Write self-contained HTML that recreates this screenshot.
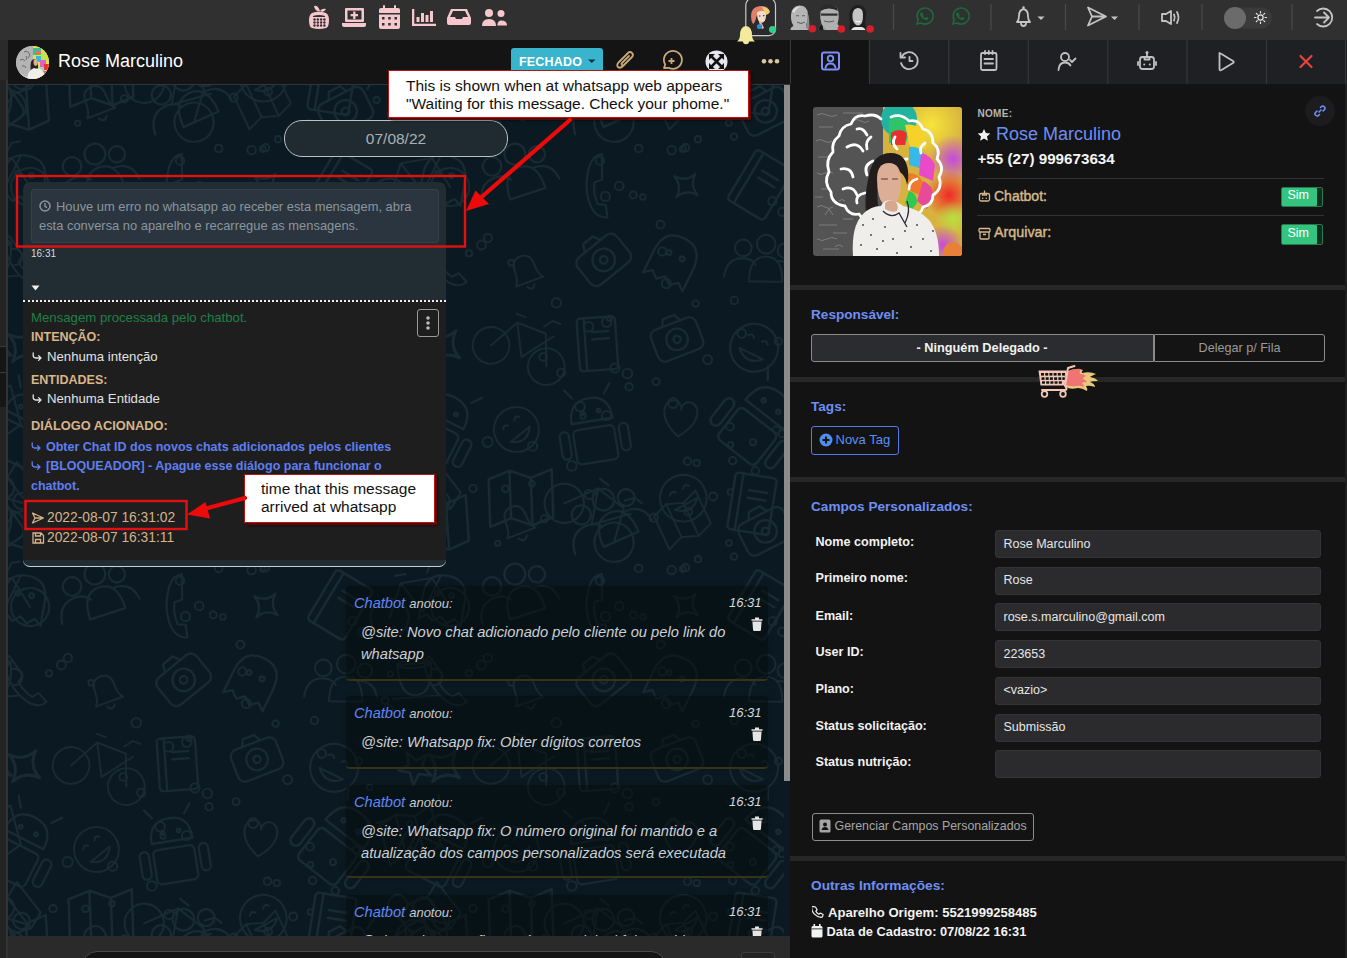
<!DOCTYPE html>
<html><head><meta charset="utf-8">
<style>
*{box-sizing:border-box;margin:0;padding:0}
html,body{width:1347px;height:958px;overflow:hidden;background:#303030;font-family:"Liberation Sans",sans-serif;position:relative}
.a{position:absolute}
#top{left:0;top:0;width:1347px;height:40px;background:#303030;z-index:20}
#lstrip{left:0;top:40px;width:8px;height:918px;background:#2b2b2b}
#chead{left:8px;top:40px;width:782px;height:45px;background:#141414;border-bottom:1px solid #30363b;z-index:5}
#cbody{left:8px;top:84px;width:776px;height:852px;background:#0b1a22;overflow:hidden}
#sbar{left:784px;top:84px;width:6px;height:697px;background:#8c8c8c}
#strack{left:784px;top:781px;width:6px;height:155px;background:#0b1a22}
#cfoot{left:8px;top:936px;width:782px;height:22px;background:#2a2a2a}
#rpanel{left:790px;top:40px;width:557px;height:918px;background:#131313}
</style></head><body>
<div id="top" class="a">
<svg class="a" style="left:0;top:0;overflow:visible" width="1347" height="48" viewBox="0 0 1347 48">
 <g fill="#f6c8cd">
  <!-- apple calendar -->
  <path d="M314 6 q4 -1 6 5 q-5 1 -6 -5z M320 11 q2 -3 6 -2 q-2 4 -6 2z"/>
  <path d="M312 13 q7 -3 14 0 q3 2 3 7 q0 7 -3 8 q-7 2 -14 0 q-3 -1 -3 -8 q0 -5 3 -7z"/>
  <!-- laptop medical -->
  <rect x="345" y="8" width="19" height="14" rx="1"/>
  <path d="M342 23 h24 v2 q0 2 -2 2 h-20 q-2 0 -2 -2z"/>
  <!-- calendar -->
  <rect x="379" y="8" width="21" height="21" rx="2"/>
  <rect x="383" y="5" width="2" height="5" rx="1"/><rect x="394" y="5" width="2" height="5" rx="1"/>
  <!-- chart -->
  <path d="M412 9 h2.3 v14.7 h21.7 v2.3 h-24z"/>
  <rect x="416.5" y="17" width="3" height="5"/><rect x="421" y="13" width="3" height="9"/><rect x="425.5" y="15" width="3" height="7"/><rect x="430" y="11" width="3" height="11"/>
  <!-- inbox -->
  <path d="M451 9 h16 l4 9 v5 q0 2 -2 2 h-20 q-2 0 -2 -2 v-5z"/>
  <!-- users -->
  <circle cx="489" cy="13" r="4"/><circle cx="501" cy="13.5" r="3.5"/>
  <path d="M482 26 q0 -7 7 -7 q7 0 7 7z"/><path d="M497 25.5 q1 -5 4 -5 q6 0 6 5z"/>
 </g>
 <g fill="#303030">
  <path d="M313 16 q6 -2 12 0 v1 h-12z"/>
  <g><circle cx="314.5" cy="19.5" r="1.2"/><circle cx="317.8" cy="19.5" r="1.2"/><circle cx="321.1" cy="19.5" r="1.2"/><circle cx="324.4" cy="19.5" r="1.2"/>
  <circle cx="314.5" cy="22.5" r="1.2"/><circle cx="317.8" cy="22.5" r="1.2"/><circle cx="321.1" cy="22.5" r="1.2"/><circle cx="324.4" cy="22.5" r="1.2"/>
  <circle cx="314.5" cy="25.5" r="1.2"/><circle cx="317.8" cy="25.5" r="1.2"/><circle cx="321.1" cy="25.5" r="1.2"/><circle cx="324.4" cy="25.5" r="1.2"/></g>
  <rect x="347.5" y="10.5" width="14" height="9"/>
  <rect x="379" y="13" width="21" height="1.5"/>
  <rect x="382" y="17" width="2.5" height="2.5"/><rect x="388.2" y="17" width="2.5" height="2.5"/><rect x="394.5" y="17" width="2.5" height="2.5"/>
  <rect x="382" y="23" width="2.5" height="2.5"/><rect x="388.2" y="23" width="2.5" height="2.5"/><rect x="394.5" y="23" width="2.5" height="2.5"/>
  <path d="M453 11 h12 l3 6 h-5 l-1 2 h-6 l-1 -2 h-5z"/>
  <rect x="496" y="19" width="1.2" height="8"/>
 </g>
 <path d="M350.6 15.2 h7.4 M354.3 11.5 v7.4" stroke="#f6c8cd" stroke-width="2.3"/>
 <!-- avatar box -->
 <rect x="745.8" y="-1.6" width="29.7" height="37.2" rx="6.5" fill="#2a2a2c" stroke="#c8c8c8" stroke-width="1.2"/>
 <g>
  <path d="M751 16 q0 -9 9 -10 q8 -1 10 6 q-3 -2 -8 -1 q-5 2 -6 7 q-1 5 -3 6 q-2 -3 -2 -8z" fill="#e0806a"/>
  <path d="M762 7 q6 0 8 5 q-2 3 -4 3z" fill="#ecd070"/>
  <path d="M757 12.5 q4 -3 8 -1 q2 4 0 9 q-2 3 -5 2 q-3 -2 -3 -10z" fill="#f3dcc8"/>
  <path d="M759 16 h1.4 M763 15.6 h1.4" stroke="#3a2a2a" stroke-width="1.1"/>
  <path d="M760 21 q2 2 4 7 l-2 1 q-2 -3 -3 -7z" fill="#eab8a0"/>
  <circle cx="759.5" cy="26.5" r="2.6" fill="#2a8fd0"/>
  <circle cx="772.6" cy="29.5" r="3.6" fill="#2fd08a"/>
 </g>
 <path d="M737 41.5 q2.5 -1.5 3 -6 q0 -9 6 -9.5 q6 0.5 6 9.5 q0.5 4.5 3 6z M743 41.5 h6 q0 2.8 -3 2.8 q-3 0 -3 -2.8z" fill="#f3ea9c"/>
 <!-- grayscale avatars -->
 <g>
  <path d="M790.5 30 q0 -3 3 -4 q-3 -5 -2.5 -11 q0.5 -9 8.5 -9.5 q8 0 8.5 9 q0.3 6 -2 11 q3 1 3 4.5z" fill="#b6b6b6"/>
  <path d="M792 12 q3 -6 9 -5.5 q-5 2 -6.5 6z" fill="#dedede"/>
  <path d="M796 16 q2 -1 3 0 M802 16 q2 -1 3 0 M797 22 q4 3 8 0" stroke="#5a5a5a" stroke-width="1" fill="none"/>
  <path d="M805 9 q3 4 2.5 10 q-0.5 5 -2 8 l3 3 h1 q0 -10 -1 -15z" fill="#8a8a8a"/>
  <path d="M818.5 30 q0 -4 3 -6 q-2 -6 -1 -12 q1 -7 9 -7 q8 0 9 7 q1 6 -1 12 q2.5 2 2.5 6z" fill="#b0b0b0"/>
  <path d="M820.5 11 q0 -6 8.5 -6.5 q8 0 9 6.5 q-4 -2.5 -9 -2.5 q-5 0 -8.5 2.5z" fill="#2a2a2a"/>
  <path d="M821 13.5 h16.5 v2.2 h-16.5z" fill="#303030"/>
  <path d="M824 21 q5 2 10 0" stroke="#5a5a5a" stroke-width="1" fill="none"/>
  <path d="M818.5 30 q0 -4 3 -6 l4 6z" fill="#1a1a1a"/><path d="M822.5 25 l2.5 5 h-1.2z" fill="#e0e0e0"/>
  <path d="M849 30 q0 -4 1 -8 q-2 -9 1 -13 q3 -4 7 -4 q5 0 7 4 q2 5 0 13 q1 4 1 8z" fill="#1e1e1e"/>
  <path d="M852.5 14 q1 -6 5.5 -6 q5 0 5 7 q0 7 -2 9 q-3 3 -6 0 q-3 -3 -2.5 -10z" fill="#c4c4c4"/>
  <path d="M855.5 21 q2.5 1.5 5 0" stroke="#f5f5f5" stroke-width="1.2" fill="none"/>
  <path d="M851 30 q2 -3 4 -3 h6 q3 0 4.5 3z" fill="#e6e6e6"/>
  <circle cx="812.4" cy="28.8" r="3.8" fill="#d61f2b"/>
  <circle cx="841.4" cy="29" r="3.8" fill="#d61f2b"/>
  <circle cx="870.2" cy="29" r="3.8" fill="#d61f2b"/>
 </g>
 <g stroke="#4a4a4a" stroke-width="1.2">
  <path d="M893.5 4 v26 M991 4 v26 M1065.5 4 v26 M1139 4 v26 M1202 4 v26 M1292 4 v26"/>
 </g>
 <!-- whatsapp -->
 <g fill="none" stroke="#1b6a3b" stroke-width="1.6">
  <path d="M917 24 l1.2 -4 a8 8 0 1 1 3 3 z"/>
  <path d="M953 24 l1.2 -4 a8 8 0 1 1 3 3 z"/>
 </g>
 <g fill="#1b6a3b">
  <path d="M920.5 13 q1 -1 2 0 l1 2 q-1 1 0 2 q1 1 2 1 l1 -1 l2 1 q0 2 -1.5 2 q-4 0 -6.5 -4 q-1 -2 0 -3z"/>
  <path d="M956.5 13 q1 -1 2 0 l1 2 q-1 1 0 2 q1 1 2 1 l1 -1 l2 1 q0 2 -1.5 2 q-4 0 -6.5 -4 q-1 -2 0 -3z"/>
 </g>
 <!-- bell -->
 <g fill="none" stroke="#c4c4c4" stroke-width="1.8" stroke-linejoin="round">
  <path d="M1017 22 q2 -2 2 -6 q0 -6 4.5 -7 q4.5 1 4.5 7 q0 4 2 6z"/>
  <path d="M1021 23 q0 3 2.5 3 q2.5 0 2.5 -3"/>
 </g>
 <circle cx="1023.5" cy="7.5" r="1.2" fill="#c4c4c4"/>
 <path d="M1037.5 16.5 h7 l-3.5 3.5z" fill="#c4c4c4"/>
 <!-- send -->
 <path d="M1088 7.5 l18 9 l-18 9 l4 -9z M1092 16.5 h13" fill="none" stroke="#c4c4c4" stroke-width="1.8" stroke-linejoin="round"/>
 <path d="M1111 16.5 h7 l-3.5 3.5z" fill="#c4c4c4"/>
 <!-- speaker -->
 <path d="M1162 14 h4 l5 -3 v13 l-5 -3 h-4z" fill="none" stroke="#c4c4c4" stroke-width="1.8" stroke-linejoin="round"/>
 <path d="M1174 14.5 q1.5 3 0 6 M1177 12 q3 5.5 0 11" fill="none" stroke="#c4c4c4" stroke-width="1.8" stroke-linecap="round"/>
 <!-- toggle -->
 <rect x="1224" y="7.5" width="48" height="21" rx="10.5" fill="#3a3a3a"/>
 <circle cx="1235" cy="18" r="11" fill="#6b6b6b"/>
 <g stroke="#e8e8e8" stroke-width="1.2" stroke-linecap="round"><circle cx="1260.5" cy="17.5" r="2.6" fill="none"/>
 <path d="M1260.5 11.5 v1.5 M1260.5 22 v1.5 M1254.5 17.5 h1.5 M1265 17.5 h1.5 M1256.3 13.3 l1 1 M1263.7 20.7 l1 1 M1256.3 21.7 l1 -1 M1263.7 14.3 l1 -1"/></g>
 <!-- logout -->
 <path d="M1317 11 a9 9 0 1 1 0 13" fill="none" stroke="#c4c4c4" stroke-width="1.8" stroke-linecap="round"/>
 <path d="M1315 17.5 h14 M1324 12.5 l5 5 l-5 5" fill="none" stroke="#c4c4c4" stroke-width="1.8" stroke-linecap="round" stroke-linejoin="round"/>
</svg>
</div>
<div id="lstrip" class="a">
 <div class="a" style="left:0;top:40px;width:6px;height:878px;background:#242424"></div>
 <div class="a" style="left:6px;top:40px;width:2px;height:878px;background:#333"></div>
 <div class="a" style="left:0;top:306px;width:6px;height:61px;background:#161616;border-top:1px solid #3a3a3a"></div>
 <div class="a" style="left:0;top:332px;width:6px;height:1px;background:#3a3a3a"></div>
</div>
<div id="chead" class="a">
 <div class="a" style="left:8px;top:6px;width:33px;height:33px;border-radius:50%;overflow:hidden;background:#aaa">
  <svg width="33" height="33" viewBox="0 0 33 33">
   <rect width="33" height="33" fill="#b4b4b4"/>
   <g fill="none" stroke="#6a6a6a" stroke-width="1"><path d="M8 6 q3 -2 5 1 q2 3 -1 5 M4 14 q3 -2 5 1 M6 20 q3 -1 4 2 M10 10 q2 2 0 4"/></g>
   <path d="M3 26 q4 4 12 6 h-15z" fill="#cfcfcf"/>
   <rect x="17" y="0" width="16" height="33" fill="#e6e23a"/>
   <path d="M17 2 h8 v7 h-8z" fill="#3ac08a"/><path d="M19 5 h6 v3 h-6z" fill="#f06a6a"/>
   <path d="M20 10 h5 v6 h-5z" fill="#38b8d8"/><path d="M25 6 h8 v8 h-8z" fill="#c9e04a"/>
   <path d="M24 14 h6 v7 h-6z" fill="#e060c8"/><path d="M28 18 h5 v6 h-5z" fill="#e83434"/>
   <path d="M22 21 h6 v8 h-6z" fill="#9ad8a8"/><path d="M27 25 h6 v6 h-6z" fill="#d050d0"/>
   <path d="M15 28 q-1 -8 0 -12 q1 -3 4 -3 q3 0 3 4 v6z" fill="#2a2220"/>
   <path d="M17.5 16 q0 -3 2.2 -3 q2.3 0 2.3 3.5 q0 3 -2.3 3.5 q-2.2 -.5 -2.2 -4z" fill="#d9b199"/>
   <path d="M11 33 q1 -9 7 -11 q3 1 5 0 q6 3 7 11z" fill="#eeeeea"/>
  </svg>
 </div>
 <div class="a" style="left:50px;top:10px;font-size:18px;color:#fff;white-space:nowrap;line-height:22px">Rose Marculino</div>
 <div class="a" style="left:503px;top:7.5px;width:92px;height:30px;background:#38b4cc;border-radius:3px"></div>
 <div class="a" style="left:511px;top:15px;font-size:12.5px;font-weight:bold;color:#fff;line-height:15px;letter-spacing:0.2px">FECHADO</div>
 <svg class="a" style="left:0;top:0" width="782" height="44" viewBox="8 40 782 44">
  <path d="M588 59.5 h7.5 l-3.75 3.5z" fill="#15303c"/>
  <!-- paperclip -->
  <path d="M632 55 l-9 9 q-3 3 -5 1 q-2 -2 1 -5 l9 -9 q2 -2 4 0 q2 2 0 4 l-8 8 q-1 1 -2 0 q-1 -1 0 -2 l7 -7" fill="none" stroke="#c9a877" stroke-width="1.8" stroke-linecap="round" transform="translate(0,2)"/>
  <!-- comment plus -->
  <path d="M664 68 l1.2 -3.5 a9 9 0 1 1 3.5 3.3 z" fill="none" stroke="#c9a877" stroke-width="1.8" stroke-linejoin="round"/>
  <path d="M671.5 58 v6 M668.5 61 h6" stroke="#c9a877" stroke-width="1.8"/>
  <!-- expand -->
  <circle cx="716.5" cy="61.5" r="11" fill="#e6e6ee"/>
  <g stroke="#111" stroke-width="2.6" stroke-linecap="square"><path d="M711 56 l11 11 M722 56 l-11 11"/></g>
  <g fill="#111"><path d="M709 54 h6 l-6 6z M724 54 h-6 l6 6z M709 69 h6 l-6 -6z M724 69 h-6 l6 -6z"/></g>
  <g fill="#d9c9a2"><circle cx="764" cy="61.3" r="2.3"/><circle cx="770.5" cy="61.3" r="2.3"/><circle cx="777" cy="61.3" r="2.3"/></g>
 </svg>
</div>
<div id="cbody" class="a">
 <div id="doodle" class="a" style="left:0;top:0;width:776px;height:852px"><svg class="a" style="left:0;top:0" width="776" height="852"><defs><pattern id="dd" x="-30" y="-20" width="420" height="420" patternUnits="userSpaceOnUse"><g fill="none" stroke="#1a2a32" stroke-width="1.8" stroke-linecap="round" stroke-linejoin="round"><g transform="translate(-420,-420)"><g transform="translate(39.2,41.0) rotate(-4) scale(1.27)"><path d="M-24 -16 l16 -6 l16 6 l16 -6 v36 l-16 6 l-16 -6 l-16 6z M-8 -22 v36 M8 -16 v36"/></g><g transform="translate(45.7,115.0) rotate(10) scale(1.18)"><path d="M-18 20 v-20 q0 -20 18 -20 q18 0 18 20 v20 l-6 -5 l-6 5 l-6 -5 l-6 5 l-6 -5z"/><circle cx="-6" cy="-4" r="2"/><circle cx="6" cy="-4" r="2"/></g><g transform="translate(44.7,193.5) rotate(3) scale(1.05)"><path d="M-14 -20 q-6 6 -2 16 q8 20 24 28 q10 4 16 -2 l-8 -8 l-6 4 q-10 -6 -14 -14 l4 -6z"/></g><g transform="translate(46.2,282.2) rotate(37) scale(1.61)"><path d="M0 -12 q2 10 12 12 q-10 2 -12 12 q-2 -10 -12 -12 q10 -2 12 -12z"/></g><g transform="translate(42.5,361.8) rotate(27) scale(1.22)"><path d="M-18 -6 q0 -20 18 -20 q18 0 18 20z M-14 -28 l-6 -8 M14 -28 l6 -8"/><rect x="-18" y="0" width="36" height="30" rx="4"/><rect x="-30" y="0" width="8" height="24" rx="4"/><rect x="22" y="0" width="8" height="24" rx="4"/><circle cx="-7" cy="-14" r="1.5"/><circle cx="7" cy="-14" r="1.5"/></g><g transform="translate(33.0,432.6) rotate(-38) scale(1.08)"><path d="M-24 -16 l16 -6 l16 6 l16 -6 v36 l-16 6 l-16 -6 l-16 6z M-8 -22 v36 M8 -16 v36"/></g><g transform="translate(119.4,39.0) rotate(-21) scale(1.07)"><path d="M-14 10 q4 -4 4 -14 q0 -12 10 -12 q10 0 10 12 q0 10 4 14z M-4 14 q4 6 8 0"/></g><g transform="translate(116.7,112.1) rotate(-18) scale(1.16)"><circle cx="-16" cy="-14" r="8"/><circle cx="6" cy="-18" r="9"/><circle cx="24" cy="-12" r="7"/><path d="M-34 14 q2 -18 18 -18 q8 0 12 6 M-10 18 q0 -24 16 -24 q16 0 16 24z M18 -2 q16 0 18 16"/></g><g transform="translate(128.0,207.9) rotate(-20) scale(1.03)"><path d="M-14 10 q4 -4 4 -14 q0 -12 10 -12 q10 0 10 12 q0 10 4 14z M-4 14 q4 6 8 0"/></g><g transform="translate(124.1,280.2) rotate(21) scale(1.02)"><circle cx="-28" cy="12" r="18"/><circle cx="30" cy="12" r="18"/><path d="M-28 12 l16 -30 h30 l12 30 M-12 -18 l16 30 l22 -30 M-16 -26 h10 M14 -24 l6 -8 h8"/></g><g transform="translate(118.4,365.5) rotate(-39) scale(1.02)"><circle cx="0" cy="0" r="22"/><path d="M-10 -8 q3 -4 6 0 M4 -8 q3 -4 6 0 M-12 6 q12 12 24 0z"/></g><g transform="translate(123.0,435.4) rotate(-2) scale(1.32)"><path d="M-24 -16 l16 -6 l16 6 l16 -6 v36 l-16 6 l-16 -6 l-16 6z M-8 -22 v36 M8 -16 v36"/></g><g transform="translate(207.7,38.4) rotate(-24) scale(1.20)"><circle cx="-16" cy="-14" r="8"/><circle cx="6" cy="-18" r="9"/><circle cx="24" cy="-12" r="7"/><path d="M-34 14 q2 -18 18 -18 q8 0 12 6 M-10 18 q0 -24 16 -24 q16 0 16 24z M18 -2 q16 0 18 16"/></g><g transform="translate(202.8,117.4) rotate(37) scale(1.12)"><path d="M-14 -20 q-6 6 -2 16 q8 20 24 28 q10 4 16 -2 l-8 -8 l-6 4 q-10 -6 -14 -14 l4 -6z"/></g><g transform="translate(204.1,193.9) rotate(-39) scale(1.25)"><rect x="-20" y="-12" width="40" height="28" rx="6"/><circle cx="0" cy="2" r="9"/><circle cx="0" cy="2" r="3"/><path d="M-8 -12 l3 -6 h10 l3 6"/></g><g transform="translate(199.4,279.8) rotate(-4) scale(1.20)"><rect x="-16" y="-22" width="32" height="44" rx="3"/><path d="M-10 -22 v44 M-4 -10 h14 M-4 -4 h14"/></g><g transform="translate(195.1,363.7) rotate(-9) scale(1.15)"><path d="M-18 -6 q0 -20 18 -20 q18 0 18 20z M-14 -28 l-6 -8 M14 -28 l6 -8"/><rect x="-18" y="0" width="36" height="30" rx="4"/><rect x="-30" y="0" width="8" height="24" rx="4"/><rect x="22" y="0" width="8" height="24" rx="4"/><circle cx="-7" cy="-14" r="1.5"/><circle cx="7" cy="-14" r="1.5"/></g><g transform="translate(198.3,447.8) rotate(38) scale(1.09)"><circle cx="-28" cy="12" r="18"/><circle cx="30" cy="12" r="18"/><path d="M-28 12 l16 -30 h30 l12 30 M-12 -18 l16 30 l22 -30 M-16 -26 h10 M14 -24 l6 -8 h8"/></g><g transform="translate(284.9,36.9) rotate(-25) scale(1.01)"><path d="M-24 -16 l16 -6 l16 6 l16 -6 v36 l-16 6 l-16 -6 l-16 6z M-8 -22 v36 M8 -16 v36"/></g><g transform="translate(287.9,121.6) rotate(39) scale(1.24)"><path d="M0 -12 q2 10 12 12 q-10 2 -12 12 q-2 -10 -12 -12 q10 -2 12 -12z"/></g><g transform="translate(275.4,196.1) rotate(26) scale(1.21)"><path d="M-18 20 v-20 q0 -20 18 -20 q18 0 18 20 v20 l-6 -5 l-6 5 l-6 -5 l-6 5 l-6 -5z"/><circle cx="-6" cy="-4" r="2"/><circle cx="6" cy="-4" r="2"/></g><g transform="translate(278.2,273.2) rotate(-21) scale(1.20)"><rect x="-20" y="-12" width="40" height="28" rx="6"/><circle cx="0" cy="2" r="9"/><circle cx="0" cy="2" r="3"/><path d="M-8 -12 l3 -6 h10 l3 6"/></g><g transform="translate(281.6,357.9) rotate(7) scale(1.04)"><path d="M0 14 C-22 -2 -18 -20 -7 -20 C-3 -20 0 -16 0 -12 C0 -16 3 -20 7 -20 C18 -20 22 -2 0 14z"/></g><g transform="translate(285.3,434.2) rotate(-28) scale(1.06)"><circle cx="0" cy="0" r="22"/><path d="M-10 -8 q3 -4 6 0 M4 -8 q3 -4 6 0 M-12 6 q12 12 24 0z"/></g><g transform="translate(366.5,45.1) rotate(-27) scale(1.25)"><rect x="-20" y="-12" width="40" height="28" rx="6"/><circle cx="0" cy="2" r="9"/><circle cx="0" cy="2" r="3"/><path d="M-8 -12 l3 -6 h10 l3 6"/></g><g transform="translate(362.1,120.9) rotate(31) scale(1.33)"><rect x="-16" y="-22" width="32" height="44" rx="3"/><path d="M-10 -22 v44 M-4 -10 h14 M-4 -4 h14"/></g><g transform="translate(361.7,198.7) rotate(1) scale(1.04)"><circle cx="-16" cy="-14" r="8"/><circle cx="6" cy="-18" r="9"/><circle cx="24" cy="-12" r="7"/><path d="M-34 14 q2 -18 18 -18 q8 0 12 6 M-10 18 q0 -24 16 -24 q16 0 16 24z M18 -2 q16 0 18 16"/></g><g transform="translate(356.1,283.8) rotate(26) scale(1.09)"><circle cx="0" cy="0" r="22"/><path d="M-10 -8 q3 -4 6 0 M4 -8 q3 -4 6 0 M-12 6 q12 12 24 0z"/></g><g transform="translate(361.5,356.7) rotate(38) scale(1.33)"><path d="M-18 -6 q0 -20 18 -20 q18 0 18 20z M-14 -28 l-6 -8 M14 -28 l6 -8"/><rect x="-18" y="0" width="36" height="30" rx="4"/><rect x="-30" y="0" width="8" height="24" rx="4"/><rect x="22" y="0" width="8" height="24" rx="4"/><circle cx="-7" cy="-14" r="1.5"/><circle cx="7" cy="-14" r="1.5"/></g><g transform="translate(354.0,439.7) rotate(9) scale(1.30)"><rect x="-16" y="-22" width="32" height="44" rx="3"/><path d="M-10 -22 v44 M-4 -10 h14 M-4 -4 h14"/></g><g transform="translate(436.5,46.7) rotate(-34) scale(1.26)"><rect x="-20" y="-12" width="40" height="28" rx="6"/><circle cx="0" cy="2" r="9"/><circle cx="0" cy="2" r="3"/><path d="M-8 -12 l3 -6 h10 l3 6"/></g><g transform="translate(438.6,116.0) rotate(-10) scale(1.06)"><circle cx="-28" cy="12" r="18"/><circle cx="30" cy="12" r="18"/><path d="M-28 12 l16 -30 h30 l12 30 M-12 -18 l16 30 l22 -30 M-16 -26 h10 M14 -24 l6 -8 h8"/></g><g transform="translate(441.2,194.1) rotate(-4) scale(1.05)"><path d="M-20 -14 h32 q0 30 -16 30 q-16 0 -16 -30z M12 -8 q10 0 10 8 q0 8 -10 8 M-26 18 h44"/><ellipse cx="-4" cy="-14" rx="16" ry="4"/></g><g transform="translate(437.3,283.7) rotate(-29) scale(1.45)"><path d="M0 -12 l3 8 h8 l-6 5 l2 9 l-7 -5 l-7 5 l2 -9 l-6 -5 h8z"/></g><g transform="translate(432.6,352.3) rotate(-15) scale(1.13)"><path d="M-24 -16 l16 -6 l16 6 l16 -6 v36 l-16 6 l-16 -6 l-16 6z M-8 -22 v36 M8 -16 v36"/></g><g transform="translate(432.5,441.6) rotate(18) scale(1.17)"><circle cx="-16" cy="-14" r="8"/><circle cx="6" cy="-18" r="9"/><circle cx="24" cy="-12" r="7"/><path d="M-34 14 q2 -18 18 -18 q8 0 12 6 M-10 18 q0 -24 16 -24 q16 0 16 24z M18 -2 q16 0 18 16"/></g><circle cx="133.9" cy="419.7" r="2.7"/><circle cx="229.4" cy="309.5" r="4.8"/><circle cx="309.6" cy="295.6" r="4.5"/><circle cx="384.3" cy="147.8" r="4.2"/><circle cx="378.4" cy="365.9" r="3.5"/><circle cx="332.0" cy="362.7" r="3.9"/><circle cx="262.5" cy="160.6" r="4.0"/><circle cx="255.7" cy="33.7" r="4.1"/><circle cx="417.2" cy="369.5" r="4.3"/><circle cx="163.1" cy="308.7" r="4.0"/><circle cx="185.0" cy="352.1" r="2.7"/><circle cx="315.1" cy="12.5" r="4.0"/><circle cx="202.0" cy="96.7" r="4.2"/><circle cx="208.8" cy="258.1" r="4.8"/><circle cx="107.4" cy="4.7" r="3.3"/><circle cx="284.8" cy="85.1" r="2.9"/><circle cx="380.4" cy="277.2" r="3.6"/><circle cx="374.5" cy="137.3" r="4.2"/><circle cx="83.4" cy="181.0" r="4.5"/><circle cx="384.0" cy="369.7" r="3.5"/><circle cx="244.9" cy="132.9" r="2.8"/><circle cx="208.5" cy="351.6" r="4.6"/><circle cx="298.7" cy="399.0" r="3.2"/><circle cx="71.0" cy="189.3" r="3.2"/><circle cx="89.9" cy="173.9" r="4.1"/><circle cx="207.4" cy="132.5" r="4.6"/><circle cx="412.5" cy="190.0" r="2.7"/><circle cx="13.2" cy="366.6" r="2.6"/><circle cx="297.6" cy="239.6" r="3.3"/><circle cx="332.4" cy="8.0" r="2.8"/><circle cx="191.0" cy="10.4" r="4.6"/><circle cx="99.7" cy="59.2" r="2.6"/><circle cx="264.3" cy="187.5" r="4.1"/><circle cx="275.1" cy="339.1" r="4.9"/><circle cx="287.5" cy="83.7" r="3.7"/><circle cx="75.0" cy="4.5" r="3.7"/><circle cx="300.0" cy="75.2" r="3.2"/><circle cx="145.2" cy="292.9" r="3.8"/><circle cx="258.1" cy="317.6" r="3.5"/><circle cx="332.6" cy="380.6" r="2.7"/><circle cx="391.7" cy="303.4" r="2.8"/><circle cx="190.5" cy="262.7" r="4.8"/><circle cx="158.3" cy="238.9" r="4.7"/><circle cx="334.6" cy="396.6" r="3.7"/><circle cx="273.6" cy="86.1" r="4.3"/><circle cx="343.7" cy="269.5" r="4.3"/><circle cx="89.6" cy="378.0" r="5.0"/><circle cx="410.5" cy="225.5" r="4.5"/><circle cx="134.6" cy="382.2" r="4.6"/><circle cx="146.4" cy="34.8" r="3.6"/><circle cx="231.1" cy="322.7" r="3.7"/><circle cx="11.9" cy="339.8" r="2.7"/><circle cx="335.9" cy="72.6" r="3.3"/><circle cx="330.9" cy="59.0" r="2.9"/><circle cx="216.9" cy="303.9" r="4.6"/><circle cx="289.5" cy="397.2" r="3.7"/><circle cx="398.6" cy="36.1" r="3.1"/><circle cx="221.2" cy="121.9" r="4.3"/><circle cx="268.3" cy="219.6" r="4.6"/><circle cx="235.2" cy="130.9" r="3.5"/><circle cx="355.0" cy="378.2" r="3.0"/><circle cx="357.3" cy="406.7" r="3.8"/><circle cx="240.7" cy="84.4" r="3.8"/><circle cx="211.3" cy="254.2" r="2.6"/><circle cx="407.2" cy="216.7" r="3.5"/><circle cx="336.4" cy="236.4" r="3.7"/><circle cx="290.2" cy="27.7" r="3.8"/><circle cx="173.8" cy="401.9" r="4.8"/><circle cx="113.1" cy="198.7" r="2.8"/><circle cx="182.1" cy="342.6" r="4.8"/></g><g transform="translate(-420,0)"><g transform="translate(39.2,41.0) rotate(-4) scale(1.27)"><path d="M-24 -16 l16 -6 l16 6 l16 -6 v36 l-16 6 l-16 -6 l-16 6z M-8 -22 v36 M8 -16 v36"/></g><g transform="translate(45.7,115.0) rotate(10) scale(1.18)"><path d="M-18 20 v-20 q0 -20 18 -20 q18 0 18 20 v20 l-6 -5 l-6 5 l-6 -5 l-6 5 l-6 -5z"/><circle cx="-6" cy="-4" r="2"/><circle cx="6" cy="-4" r="2"/></g><g transform="translate(44.7,193.5) rotate(3) scale(1.05)"><path d="M-14 -20 q-6 6 -2 16 q8 20 24 28 q10 4 16 -2 l-8 -8 l-6 4 q-10 -6 -14 -14 l4 -6z"/></g><g transform="translate(46.2,282.2) rotate(37) scale(1.61)"><path d="M0 -12 q2 10 12 12 q-10 2 -12 12 q-2 -10 -12 -12 q10 -2 12 -12z"/></g><g transform="translate(42.5,361.8) rotate(27) scale(1.22)"><path d="M-18 -6 q0 -20 18 -20 q18 0 18 20z M-14 -28 l-6 -8 M14 -28 l6 -8"/><rect x="-18" y="0" width="36" height="30" rx="4"/><rect x="-30" y="0" width="8" height="24" rx="4"/><rect x="22" y="0" width="8" height="24" rx="4"/><circle cx="-7" cy="-14" r="1.5"/><circle cx="7" cy="-14" r="1.5"/></g><g transform="translate(33.0,432.6) rotate(-38) scale(1.08)"><path d="M-24 -16 l16 -6 l16 6 l16 -6 v36 l-16 6 l-16 -6 l-16 6z M-8 -22 v36 M8 -16 v36"/></g><g transform="translate(119.4,39.0) rotate(-21) scale(1.07)"><path d="M-14 10 q4 -4 4 -14 q0 -12 10 -12 q10 0 10 12 q0 10 4 14z M-4 14 q4 6 8 0"/></g><g transform="translate(116.7,112.1) rotate(-18) scale(1.16)"><circle cx="-16" cy="-14" r="8"/><circle cx="6" cy="-18" r="9"/><circle cx="24" cy="-12" r="7"/><path d="M-34 14 q2 -18 18 -18 q8 0 12 6 M-10 18 q0 -24 16 -24 q16 0 16 24z M18 -2 q16 0 18 16"/></g><g transform="translate(128.0,207.9) rotate(-20) scale(1.03)"><path d="M-14 10 q4 -4 4 -14 q0 -12 10 -12 q10 0 10 12 q0 10 4 14z M-4 14 q4 6 8 0"/></g><g transform="translate(124.1,280.2) rotate(21) scale(1.02)"><circle cx="-28" cy="12" r="18"/><circle cx="30" cy="12" r="18"/><path d="M-28 12 l16 -30 h30 l12 30 M-12 -18 l16 30 l22 -30 M-16 -26 h10 M14 -24 l6 -8 h8"/></g><g transform="translate(118.4,365.5) rotate(-39) scale(1.02)"><circle cx="0" cy="0" r="22"/><path d="M-10 -8 q3 -4 6 0 M4 -8 q3 -4 6 0 M-12 6 q12 12 24 0z"/></g><g transform="translate(123.0,435.4) rotate(-2) scale(1.32)"><path d="M-24 -16 l16 -6 l16 6 l16 -6 v36 l-16 6 l-16 -6 l-16 6z M-8 -22 v36 M8 -16 v36"/></g><g transform="translate(207.7,38.4) rotate(-24) scale(1.20)"><circle cx="-16" cy="-14" r="8"/><circle cx="6" cy="-18" r="9"/><circle cx="24" cy="-12" r="7"/><path d="M-34 14 q2 -18 18 -18 q8 0 12 6 M-10 18 q0 -24 16 -24 q16 0 16 24z M18 -2 q16 0 18 16"/></g><g transform="translate(202.8,117.4) rotate(37) scale(1.12)"><path d="M-14 -20 q-6 6 -2 16 q8 20 24 28 q10 4 16 -2 l-8 -8 l-6 4 q-10 -6 -14 -14 l4 -6z"/></g><g transform="translate(204.1,193.9) rotate(-39) scale(1.25)"><rect x="-20" y="-12" width="40" height="28" rx="6"/><circle cx="0" cy="2" r="9"/><circle cx="0" cy="2" r="3"/><path d="M-8 -12 l3 -6 h10 l3 6"/></g><g transform="translate(199.4,279.8) rotate(-4) scale(1.20)"><rect x="-16" y="-22" width="32" height="44" rx="3"/><path d="M-10 -22 v44 M-4 -10 h14 M-4 -4 h14"/></g><g transform="translate(195.1,363.7) rotate(-9) scale(1.15)"><path d="M-18 -6 q0 -20 18 -20 q18 0 18 20z M-14 -28 l-6 -8 M14 -28 l6 -8"/><rect x="-18" y="0" width="36" height="30" rx="4"/><rect x="-30" y="0" width="8" height="24" rx="4"/><rect x="22" y="0" width="8" height="24" rx="4"/><circle cx="-7" cy="-14" r="1.5"/><circle cx="7" cy="-14" r="1.5"/></g><g transform="translate(198.3,447.8) rotate(38) scale(1.09)"><circle cx="-28" cy="12" r="18"/><circle cx="30" cy="12" r="18"/><path d="M-28 12 l16 -30 h30 l12 30 M-12 -18 l16 30 l22 -30 M-16 -26 h10 M14 -24 l6 -8 h8"/></g><g transform="translate(284.9,36.9) rotate(-25) scale(1.01)"><path d="M-24 -16 l16 -6 l16 6 l16 -6 v36 l-16 6 l-16 -6 l-16 6z M-8 -22 v36 M8 -16 v36"/></g><g transform="translate(287.9,121.6) rotate(39) scale(1.24)"><path d="M0 -12 q2 10 12 12 q-10 2 -12 12 q-2 -10 -12 -12 q10 -2 12 -12z"/></g><g transform="translate(275.4,196.1) rotate(26) scale(1.21)"><path d="M-18 20 v-20 q0 -20 18 -20 q18 0 18 20 v20 l-6 -5 l-6 5 l-6 -5 l-6 5 l-6 -5z"/><circle cx="-6" cy="-4" r="2"/><circle cx="6" cy="-4" r="2"/></g><g transform="translate(278.2,273.2) rotate(-21) scale(1.20)"><rect x="-20" y="-12" width="40" height="28" rx="6"/><circle cx="0" cy="2" r="9"/><circle cx="0" cy="2" r="3"/><path d="M-8 -12 l3 -6 h10 l3 6"/></g><g transform="translate(281.6,357.9) rotate(7) scale(1.04)"><path d="M0 14 C-22 -2 -18 -20 -7 -20 C-3 -20 0 -16 0 -12 C0 -16 3 -20 7 -20 C18 -20 22 -2 0 14z"/></g><g transform="translate(285.3,434.2) rotate(-28) scale(1.06)"><circle cx="0" cy="0" r="22"/><path d="M-10 -8 q3 -4 6 0 M4 -8 q3 -4 6 0 M-12 6 q12 12 24 0z"/></g><g transform="translate(366.5,45.1) rotate(-27) scale(1.25)"><rect x="-20" y="-12" width="40" height="28" rx="6"/><circle cx="0" cy="2" r="9"/><circle cx="0" cy="2" r="3"/><path d="M-8 -12 l3 -6 h10 l3 6"/></g><g transform="translate(362.1,120.9) rotate(31) scale(1.33)"><rect x="-16" y="-22" width="32" height="44" rx="3"/><path d="M-10 -22 v44 M-4 -10 h14 M-4 -4 h14"/></g><g transform="translate(361.7,198.7) rotate(1) scale(1.04)"><circle cx="-16" cy="-14" r="8"/><circle cx="6" cy="-18" r="9"/><circle cx="24" cy="-12" r="7"/><path d="M-34 14 q2 -18 18 -18 q8 0 12 6 M-10 18 q0 -24 16 -24 q16 0 16 24z M18 -2 q16 0 18 16"/></g><g transform="translate(356.1,283.8) rotate(26) scale(1.09)"><circle cx="0" cy="0" r="22"/><path d="M-10 -8 q3 -4 6 0 M4 -8 q3 -4 6 0 M-12 6 q12 12 24 0z"/></g><g transform="translate(361.5,356.7) rotate(38) scale(1.33)"><path d="M-18 -6 q0 -20 18 -20 q18 0 18 20z M-14 -28 l-6 -8 M14 -28 l6 -8"/><rect x="-18" y="0" width="36" height="30" rx="4"/><rect x="-30" y="0" width="8" height="24" rx="4"/><rect x="22" y="0" width="8" height="24" rx="4"/><circle cx="-7" cy="-14" r="1.5"/><circle cx="7" cy="-14" r="1.5"/></g><g transform="translate(354.0,439.7) rotate(9) scale(1.30)"><rect x="-16" y="-22" width="32" height="44" rx="3"/><path d="M-10 -22 v44 M-4 -10 h14 M-4 -4 h14"/></g><g transform="translate(436.5,46.7) rotate(-34) scale(1.26)"><rect x="-20" y="-12" width="40" height="28" rx="6"/><circle cx="0" cy="2" r="9"/><circle cx="0" cy="2" r="3"/><path d="M-8 -12 l3 -6 h10 l3 6"/></g><g transform="translate(438.6,116.0) rotate(-10) scale(1.06)"><circle cx="-28" cy="12" r="18"/><circle cx="30" cy="12" r="18"/><path d="M-28 12 l16 -30 h30 l12 30 M-12 -18 l16 30 l22 -30 M-16 -26 h10 M14 -24 l6 -8 h8"/></g><g transform="translate(441.2,194.1) rotate(-4) scale(1.05)"><path d="M-20 -14 h32 q0 30 -16 30 q-16 0 -16 -30z M12 -8 q10 0 10 8 q0 8 -10 8 M-26 18 h44"/><ellipse cx="-4" cy="-14" rx="16" ry="4"/></g><g transform="translate(437.3,283.7) rotate(-29) scale(1.45)"><path d="M0 -12 l3 8 h8 l-6 5 l2 9 l-7 -5 l-7 5 l2 -9 l-6 -5 h8z"/></g><g transform="translate(432.6,352.3) rotate(-15) scale(1.13)"><path d="M-24 -16 l16 -6 l16 6 l16 -6 v36 l-16 6 l-16 -6 l-16 6z M-8 -22 v36 M8 -16 v36"/></g><g transform="translate(432.5,441.6) rotate(18) scale(1.17)"><circle cx="-16" cy="-14" r="8"/><circle cx="6" cy="-18" r="9"/><circle cx="24" cy="-12" r="7"/><path d="M-34 14 q2 -18 18 -18 q8 0 12 6 M-10 18 q0 -24 16 -24 q16 0 16 24z M18 -2 q16 0 18 16"/></g><circle cx="133.9" cy="419.7" r="2.7"/><circle cx="229.4" cy="309.5" r="4.8"/><circle cx="309.6" cy="295.6" r="4.5"/><circle cx="384.3" cy="147.8" r="4.2"/><circle cx="378.4" cy="365.9" r="3.5"/><circle cx="332.0" cy="362.7" r="3.9"/><circle cx="262.5" cy="160.6" r="4.0"/><circle cx="255.7" cy="33.7" r="4.1"/><circle cx="417.2" cy="369.5" r="4.3"/><circle cx="163.1" cy="308.7" r="4.0"/><circle cx="185.0" cy="352.1" r="2.7"/><circle cx="315.1" cy="12.5" r="4.0"/><circle cx="202.0" cy="96.7" r="4.2"/><circle cx="208.8" cy="258.1" r="4.8"/><circle cx="107.4" cy="4.7" r="3.3"/><circle cx="284.8" cy="85.1" r="2.9"/><circle cx="380.4" cy="277.2" r="3.6"/><circle cx="374.5" cy="137.3" r="4.2"/><circle cx="83.4" cy="181.0" r="4.5"/><circle cx="384.0" cy="369.7" r="3.5"/><circle cx="244.9" cy="132.9" r="2.8"/><circle cx="208.5" cy="351.6" r="4.6"/><circle cx="298.7" cy="399.0" r="3.2"/><circle cx="71.0" cy="189.3" r="3.2"/><circle cx="89.9" cy="173.9" r="4.1"/><circle cx="207.4" cy="132.5" r="4.6"/><circle cx="412.5" cy="190.0" r="2.7"/><circle cx="13.2" cy="366.6" r="2.6"/><circle cx="297.6" cy="239.6" r="3.3"/><circle cx="332.4" cy="8.0" r="2.8"/><circle cx="191.0" cy="10.4" r="4.6"/><circle cx="99.7" cy="59.2" r="2.6"/><circle cx="264.3" cy="187.5" r="4.1"/><circle cx="275.1" cy="339.1" r="4.9"/><circle cx="287.5" cy="83.7" r="3.7"/><circle cx="75.0" cy="4.5" r="3.7"/><circle cx="300.0" cy="75.2" r="3.2"/><circle cx="145.2" cy="292.9" r="3.8"/><circle cx="258.1" cy="317.6" r="3.5"/><circle cx="332.6" cy="380.6" r="2.7"/><circle cx="391.7" cy="303.4" r="2.8"/><circle cx="190.5" cy="262.7" r="4.8"/><circle cx="158.3" cy="238.9" r="4.7"/><circle cx="334.6" cy="396.6" r="3.7"/><circle cx="273.6" cy="86.1" r="4.3"/><circle cx="343.7" cy="269.5" r="4.3"/><circle cx="89.6" cy="378.0" r="5.0"/><circle cx="410.5" cy="225.5" r="4.5"/><circle cx="134.6" cy="382.2" r="4.6"/><circle cx="146.4" cy="34.8" r="3.6"/><circle cx="231.1" cy="322.7" r="3.7"/><circle cx="11.9" cy="339.8" r="2.7"/><circle cx="335.9" cy="72.6" r="3.3"/><circle cx="330.9" cy="59.0" r="2.9"/><circle cx="216.9" cy="303.9" r="4.6"/><circle cx="289.5" cy="397.2" r="3.7"/><circle cx="398.6" cy="36.1" r="3.1"/><circle cx="221.2" cy="121.9" r="4.3"/><circle cx="268.3" cy="219.6" r="4.6"/><circle cx="235.2" cy="130.9" r="3.5"/><circle cx="355.0" cy="378.2" r="3.0"/><circle cx="357.3" cy="406.7" r="3.8"/><circle cx="240.7" cy="84.4" r="3.8"/><circle cx="211.3" cy="254.2" r="2.6"/><circle cx="407.2" cy="216.7" r="3.5"/><circle cx="336.4" cy="236.4" r="3.7"/><circle cx="290.2" cy="27.7" r="3.8"/><circle cx="173.8" cy="401.9" r="4.8"/><circle cx="113.1" cy="198.7" r="2.8"/><circle cx="182.1" cy="342.6" r="4.8"/></g><g transform="translate(-420,420)"><g transform="translate(39.2,41.0) rotate(-4) scale(1.27)"><path d="M-24 -16 l16 -6 l16 6 l16 -6 v36 l-16 6 l-16 -6 l-16 6z M-8 -22 v36 M8 -16 v36"/></g><g transform="translate(45.7,115.0) rotate(10) scale(1.18)"><path d="M-18 20 v-20 q0 -20 18 -20 q18 0 18 20 v20 l-6 -5 l-6 5 l-6 -5 l-6 5 l-6 -5z"/><circle cx="-6" cy="-4" r="2"/><circle cx="6" cy="-4" r="2"/></g><g transform="translate(44.7,193.5) rotate(3) scale(1.05)"><path d="M-14 -20 q-6 6 -2 16 q8 20 24 28 q10 4 16 -2 l-8 -8 l-6 4 q-10 -6 -14 -14 l4 -6z"/></g><g transform="translate(46.2,282.2) rotate(37) scale(1.61)"><path d="M0 -12 q2 10 12 12 q-10 2 -12 12 q-2 -10 -12 -12 q10 -2 12 -12z"/></g><g transform="translate(42.5,361.8) rotate(27) scale(1.22)"><path d="M-18 -6 q0 -20 18 -20 q18 0 18 20z M-14 -28 l-6 -8 M14 -28 l6 -8"/><rect x="-18" y="0" width="36" height="30" rx="4"/><rect x="-30" y="0" width="8" height="24" rx="4"/><rect x="22" y="0" width="8" height="24" rx="4"/><circle cx="-7" cy="-14" r="1.5"/><circle cx="7" cy="-14" r="1.5"/></g><g transform="translate(33.0,432.6) rotate(-38) scale(1.08)"><path d="M-24 -16 l16 -6 l16 6 l16 -6 v36 l-16 6 l-16 -6 l-16 6z M-8 -22 v36 M8 -16 v36"/></g><g transform="translate(119.4,39.0) rotate(-21) scale(1.07)"><path d="M-14 10 q4 -4 4 -14 q0 -12 10 -12 q10 0 10 12 q0 10 4 14z M-4 14 q4 6 8 0"/></g><g transform="translate(116.7,112.1) rotate(-18) scale(1.16)"><circle cx="-16" cy="-14" r="8"/><circle cx="6" cy="-18" r="9"/><circle cx="24" cy="-12" r="7"/><path d="M-34 14 q2 -18 18 -18 q8 0 12 6 M-10 18 q0 -24 16 -24 q16 0 16 24z M18 -2 q16 0 18 16"/></g><g transform="translate(128.0,207.9) rotate(-20) scale(1.03)"><path d="M-14 10 q4 -4 4 -14 q0 -12 10 -12 q10 0 10 12 q0 10 4 14z M-4 14 q4 6 8 0"/></g><g transform="translate(124.1,280.2) rotate(21) scale(1.02)"><circle cx="-28" cy="12" r="18"/><circle cx="30" cy="12" r="18"/><path d="M-28 12 l16 -30 h30 l12 30 M-12 -18 l16 30 l22 -30 M-16 -26 h10 M14 -24 l6 -8 h8"/></g><g transform="translate(118.4,365.5) rotate(-39) scale(1.02)"><circle cx="0" cy="0" r="22"/><path d="M-10 -8 q3 -4 6 0 M4 -8 q3 -4 6 0 M-12 6 q12 12 24 0z"/></g><g transform="translate(123.0,435.4) rotate(-2) scale(1.32)"><path d="M-24 -16 l16 -6 l16 6 l16 -6 v36 l-16 6 l-16 -6 l-16 6z M-8 -22 v36 M8 -16 v36"/></g><g transform="translate(207.7,38.4) rotate(-24) scale(1.20)"><circle cx="-16" cy="-14" r="8"/><circle cx="6" cy="-18" r="9"/><circle cx="24" cy="-12" r="7"/><path d="M-34 14 q2 -18 18 -18 q8 0 12 6 M-10 18 q0 -24 16 -24 q16 0 16 24z M18 -2 q16 0 18 16"/></g><g transform="translate(202.8,117.4) rotate(37) scale(1.12)"><path d="M-14 -20 q-6 6 -2 16 q8 20 24 28 q10 4 16 -2 l-8 -8 l-6 4 q-10 -6 -14 -14 l4 -6z"/></g><g transform="translate(204.1,193.9) rotate(-39) scale(1.25)"><rect x="-20" y="-12" width="40" height="28" rx="6"/><circle cx="0" cy="2" r="9"/><circle cx="0" cy="2" r="3"/><path d="M-8 -12 l3 -6 h10 l3 6"/></g><g transform="translate(199.4,279.8) rotate(-4) scale(1.20)"><rect x="-16" y="-22" width="32" height="44" rx="3"/><path d="M-10 -22 v44 M-4 -10 h14 M-4 -4 h14"/></g><g transform="translate(195.1,363.7) rotate(-9) scale(1.15)"><path d="M-18 -6 q0 -20 18 -20 q18 0 18 20z M-14 -28 l-6 -8 M14 -28 l6 -8"/><rect x="-18" y="0" width="36" height="30" rx="4"/><rect x="-30" y="0" width="8" height="24" rx="4"/><rect x="22" y="0" width="8" height="24" rx="4"/><circle cx="-7" cy="-14" r="1.5"/><circle cx="7" cy="-14" r="1.5"/></g><g transform="translate(198.3,447.8) rotate(38) scale(1.09)"><circle cx="-28" cy="12" r="18"/><circle cx="30" cy="12" r="18"/><path d="M-28 12 l16 -30 h30 l12 30 M-12 -18 l16 30 l22 -30 M-16 -26 h10 M14 -24 l6 -8 h8"/></g><g transform="translate(284.9,36.9) rotate(-25) scale(1.01)"><path d="M-24 -16 l16 -6 l16 6 l16 -6 v36 l-16 6 l-16 -6 l-16 6z M-8 -22 v36 M8 -16 v36"/></g><g transform="translate(287.9,121.6) rotate(39) scale(1.24)"><path d="M0 -12 q2 10 12 12 q-10 2 -12 12 q-2 -10 -12 -12 q10 -2 12 -12z"/></g><g transform="translate(275.4,196.1) rotate(26) scale(1.21)"><path d="M-18 20 v-20 q0 -20 18 -20 q18 0 18 20 v20 l-6 -5 l-6 5 l-6 -5 l-6 5 l-6 -5z"/><circle cx="-6" cy="-4" r="2"/><circle cx="6" cy="-4" r="2"/></g><g transform="translate(278.2,273.2) rotate(-21) scale(1.20)"><rect x="-20" y="-12" width="40" height="28" rx="6"/><circle cx="0" cy="2" r="9"/><circle cx="0" cy="2" r="3"/><path d="M-8 -12 l3 -6 h10 l3 6"/></g><g transform="translate(281.6,357.9) rotate(7) scale(1.04)"><path d="M0 14 C-22 -2 -18 -20 -7 -20 C-3 -20 0 -16 0 -12 C0 -16 3 -20 7 -20 C18 -20 22 -2 0 14z"/></g><g transform="translate(285.3,434.2) rotate(-28) scale(1.06)"><circle cx="0" cy="0" r="22"/><path d="M-10 -8 q3 -4 6 0 M4 -8 q3 -4 6 0 M-12 6 q12 12 24 0z"/></g><g transform="translate(366.5,45.1) rotate(-27) scale(1.25)"><rect x="-20" y="-12" width="40" height="28" rx="6"/><circle cx="0" cy="2" r="9"/><circle cx="0" cy="2" r="3"/><path d="M-8 -12 l3 -6 h10 l3 6"/></g><g transform="translate(362.1,120.9) rotate(31) scale(1.33)"><rect x="-16" y="-22" width="32" height="44" rx="3"/><path d="M-10 -22 v44 M-4 -10 h14 M-4 -4 h14"/></g><g transform="translate(361.7,198.7) rotate(1) scale(1.04)"><circle cx="-16" cy="-14" r="8"/><circle cx="6" cy="-18" r="9"/><circle cx="24" cy="-12" r="7"/><path d="M-34 14 q2 -18 18 -18 q8 0 12 6 M-10 18 q0 -24 16 -24 q16 0 16 24z M18 -2 q16 0 18 16"/></g><g transform="translate(356.1,283.8) rotate(26) scale(1.09)"><circle cx="0" cy="0" r="22"/><path d="M-10 -8 q3 -4 6 0 M4 -8 q3 -4 6 0 M-12 6 q12 12 24 0z"/></g><g transform="translate(361.5,356.7) rotate(38) scale(1.33)"><path d="M-18 -6 q0 -20 18 -20 q18 0 18 20z M-14 -28 l-6 -8 M14 -28 l6 -8"/><rect x="-18" y="0" width="36" height="30" rx="4"/><rect x="-30" y="0" width="8" height="24" rx="4"/><rect x="22" y="0" width="8" height="24" rx="4"/><circle cx="-7" cy="-14" r="1.5"/><circle cx="7" cy="-14" r="1.5"/></g><g transform="translate(354.0,439.7) rotate(9) scale(1.30)"><rect x="-16" y="-22" width="32" height="44" rx="3"/><path d="M-10 -22 v44 M-4 -10 h14 M-4 -4 h14"/></g><g transform="translate(436.5,46.7) rotate(-34) scale(1.26)"><rect x="-20" y="-12" width="40" height="28" rx="6"/><circle cx="0" cy="2" r="9"/><circle cx="0" cy="2" r="3"/><path d="M-8 -12 l3 -6 h10 l3 6"/></g><g transform="translate(438.6,116.0) rotate(-10) scale(1.06)"><circle cx="-28" cy="12" r="18"/><circle cx="30" cy="12" r="18"/><path d="M-28 12 l16 -30 h30 l12 30 M-12 -18 l16 30 l22 -30 M-16 -26 h10 M14 -24 l6 -8 h8"/></g><g transform="translate(441.2,194.1) rotate(-4) scale(1.05)"><path d="M-20 -14 h32 q0 30 -16 30 q-16 0 -16 -30z M12 -8 q10 0 10 8 q0 8 -10 8 M-26 18 h44"/><ellipse cx="-4" cy="-14" rx="16" ry="4"/></g><g transform="translate(437.3,283.7) rotate(-29) scale(1.45)"><path d="M0 -12 l3 8 h8 l-6 5 l2 9 l-7 -5 l-7 5 l2 -9 l-6 -5 h8z"/></g><g transform="translate(432.6,352.3) rotate(-15) scale(1.13)"><path d="M-24 -16 l16 -6 l16 6 l16 -6 v36 l-16 6 l-16 -6 l-16 6z M-8 -22 v36 M8 -16 v36"/></g><g transform="translate(432.5,441.6) rotate(18) scale(1.17)"><circle cx="-16" cy="-14" r="8"/><circle cx="6" cy="-18" r="9"/><circle cx="24" cy="-12" r="7"/><path d="M-34 14 q2 -18 18 -18 q8 0 12 6 M-10 18 q0 -24 16 -24 q16 0 16 24z M18 -2 q16 0 18 16"/></g><circle cx="133.9" cy="419.7" r="2.7"/><circle cx="229.4" cy="309.5" r="4.8"/><circle cx="309.6" cy="295.6" r="4.5"/><circle cx="384.3" cy="147.8" r="4.2"/><circle cx="378.4" cy="365.9" r="3.5"/><circle cx="332.0" cy="362.7" r="3.9"/><circle cx="262.5" cy="160.6" r="4.0"/><circle cx="255.7" cy="33.7" r="4.1"/><circle cx="417.2" cy="369.5" r="4.3"/><circle cx="163.1" cy="308.7" r="4.0"/><circle cx="185.0" cy="352.1" r="2.7"/><circle cx="315.1" cy="12.5" r="4.0"/><circle cx="202.0" cy="96.7" r="4.2"/><circle cx="208.8" cy="258.1" r="4.8"/><circle cx="107.4" cy="4.7" r="3.3"/><circle cx="284.8" cy="85.1" r="2.9"/><circle cx="380.4" cy="277.2" r="3.6"/><circle cx="374.5" cy="137.3" r="4.2"/><circle cx="83.4" cy="181.0" r="4.5"/><circle cx="384.0" cy="369.7" r="3.5"/><circle cx="244.9" cy="132.9" r="2.8"/><circle cx="208.5" cy="351.6" r="4.6"/><circle cx="298.7" cy="399.0" r="3.2"/><circle cx="71.0" cy="189.3" r="3.2"/><circle cx="89.9" cy="173.9" r="4.1"/><circle cx="207.4" cy="132.5" r="4.6"/><circle cx="412.5" cy="190.0" r="2.7"/><circle cx="13.2" cy="366.6" r="2.6"/><circle cx="297.6" cy="239.6" r="3.3"/><circle cx="332.4" cy="8.0" r="2.8"/><circle cx="191.0" cy="10.4" r="4.6"/><circle cx="99.7" cy="59.2" r="2.6"/><circle cx="264.3" cy="187.5" r="4.1"/><circle cx="275.1" cy="339.1" r="4.9"/><circle cx="287.5" cy="83.7" r="3.7"/><circle cx="75.0" cy="4.5" r="3.7"/><circle cx="300.0" cy="75.2" r="3.2"/><circle cx="145.2" cy="292.9" r="3.8"/><circle cx="258.1" cy="317.6" r="3.5"/><circle cx="332.6" cy="380.6" r="2.7"/><circle cx="391.7" cy="303.4" r="2.8"/><circle cx="190.5" cy="262.7" r="4.8"/><circle cx="158.3" cy="238.9" r="4.7"/><circle cx="334.6" cy="396.6" r="3.7"/><circle cx="273.6" cy="86.1" r="4.3"/><circle cx="343.7" cy="269.5" r="4.3"/><circle cx="89.6" cy="378.0" r="5.0"/><circle cx="410.5" cy="225.5" r="4.5"/><circle cx="134.6" cy="382.2" r="4.6"/><circle cx="146.4" cy="34.8" r="3.6"/><circle cx="231.1" cy="322.7" r="3.7"/><circle cx="11.9" cy="339.8" r="2.7"/><circle cx="335.9" cy="72.6" r="3.3"/><circle cx="330.9" cy="59.0" r="2.9"/><circle cx="216.9" cy="303.9" r="4.6"/><circle cx="289.5" cy="397.2" r="3.7"/><circle cx="398.6" cy="36.1" r="3.1"/><circle cx="221.2" cy="121.9" r="4.3"/><circle cx="268.3" cy="219.6" r="4.6"/><circle cx="235.2" cy="130.9" r="3.5"/><circle cx="355.0" cy="378.2" r="3.0"/><circle cx="357.3" cy="406.7" r="3.8"/><circle cx="240.7" cy="84.4" r="3.8"/><circle cx="211.3" cy="254.2" r="2.6"/><circle cx="407.2" cy="216.7" r="3.5"/><circle cx="336.4" cy="236.4" r="3.7"/><circle cx="290.2" cy="27.7" r="3.8"/><circle cx="173.8" cy="401.9" r="4.8"/><circle cx="113.1" cy="198.7" r="2.8"/><circle cx="182.1" cy="342.6" r="4.8"/></g><g transform="translate(0,-420)"><g transform="translate(39.2,41.0) rotate(-4) scale(1.27)"><path d="M-24 -16 l16 -6 l16 6 l16 -6 v36 l-16 6 l-16 -6 l-16 6z M-8 -22 v36 M8 -16 v36"/></g><g transform="translate(45.7,115.0) rotate(10) scale(1.18)"><path d="M-18 20 v-20 q0 -20 18 -20 q18 0 18 20 v20 l-6 -5 l-6 5 l-6 -5 l-6 5 l-6 -5z"/><circle cx="-6" cy="-4" r="2"/><circle cx="6" cy="-4" r="2"/></g><g transform="translate(44.7,193.5) rotate(3) scale(1.05)"><path d="M-14 -20 q-6 6 -2 16 q8 20 24 28 q10 4 16 -2 l-8 -8 l-6 4 q-10 -6 -14 -14 l4 -6z"/></g><g transform="translate(46.2,282.2) rotate(37) scale(1.61)"><path d="M0 -12 q2 10 12 12 q-10 2 -12 12 q-2 -10 -12 -12 q10 -2 12 -12z"/></g><g transform="translate(42.5,361.8) rotate(27) scale(1.22)"><path d="M-18 -6 q0 -20 18 -20 q18 0 18 20z M-14 -28 l-6 -8 M14 -28 l6 -8"/><rect x="-18" y="0" width="36" height="30" rx="4"/><rect x="-30" y="0" width="8" height="24" rx="4"/><rect x="22" y="0" width="8" height="24" rx="4"/><circle cx="-7" cy="-14" r="1.5"/><circle cx="7" cy="-14" r="1.5"/></g><g transform="translate(33.0,432.6) rotate(-38) scale(1.08)"><path d="M-24 -16 l16 -6 l16 6 l16 -6 v36 l-16 6 l-16 -6 l-16 6z M-8 -22 v36 M8 -16 v36"/></g><g transform="translate(119.4,39.0) rotate(-21) scale(1.07)"><path d="M-14 10 q4 -4 4 -14 q0 -12 10 -12 q10 0 10 12 q0 10 4 14z M-4 14 q4 6 8 0"/></g><g transform="translate(116.7,112.1) rotate(-18) scale(1.16)"><circle cx="-16" cy="-14" r="8"/><circle cx="6" cy="-18" r="9"/><circle cx="24" cy="-12" r="7"/><path d="M-34 14 q2 -18 18 -18 q8 0 12 6 M-10 18 q0 -24 16 -24 q16 0 16 24z M18 -2 q16 0 18 16"/></g><g transform="translate(128.0,207.9) rotate(-20) scale(1.03)"><path d="M-14 10 q4 -4 4 -14 q0 -12 10 -12 q10 0 10 12 q0 10 4 14z M-4 14 q4 6 8 0"/></g><g transform="translate(124.1,280.2) rotate(21) scale(1.02)"><circle cx="-28" cy="12" r="18"/><circle cx="30" cy="12" r="18"/><path d="M-28 12 l16 -30 h30 l12 30 M-12 -18 l16 30 l22 -30 M-16 -26 h10 M14 -24 l6 -8 h8"/></g><g transform="translate(118.4,365.5) rotate(-39) scale(1.02)"><circle cx="0" cy="0" r="22"/><path d="M-10 -8 q3 -4 6 0 M4 -8 q3 -4 6 0 M-12 6 q12 12 24 0z"/></g><g transform="translate(123.0,435.4) rotate(-2) scale(1.32)"><path d="M-24 -16 l16 -6 l16 6 l16 -6 v36 l-16 6 l-16 -6 l-16 6z M-8 -22 v36 M8 -16 v36"/></g><g transform="translate(207.7,38.4) rotate(-24) scale(1.20)"><circle cx="-16" cy="-14" r="8"/><circle cx="6" cy="-18" r="9"/><circle cx="24" cy="-12" r="7"/><path d="M-34 14 q2 -18 18 -18 q8 0 12 6 M-10 18 q0 -24 16 -24 q16 0 16 24z M18 -2 q16 0 18 16"/></g><g transform="translate(202.8,117.4) rotate(37) scale(1.12)"><path d="M-14 -20 q-6 6 -2 16 q8 20 24 28 q10 4 16 -2 l-8 -8 l-6 4 q-10 -6 -14 -14 l4 -6z"/></g><g transform="translate(204.1,193.9) rotate(-39) scale(1.25)"><rect x="-20" y="-12" width="40" height="28" rx="6"/><circle cx="0" cy="2" r="9"/><circle cx="0" cy="2" r="3"/><path d="M-8 -12 l3 -6 h10 l3 6"/></g><g transform="translate(199.4,279.8) rotate(-4) scale(1.20)"><rect x="-16" y="-22" width="32" height="44" rx="3"/><path d="M-10 -22 v44 M-4 -10 h14 M-4 -4 h14"/></g><g transform="translate(195.1,363.7) rotate(-9) scale(1.15)"><path d="M-18 -6 q0 -20 18 -20 q18 0 18 20z M-14 -28 l-6 -8 M14 -28 l6 -8"/><rect x="-18" y="0" width="36" height="30" rx="4"/><rect x="-30" y="0" width="8" height="24" rx="4"/><rect x="22" y="0" width="8" height="24" rx="4"/><circle cx="-7" cy="-14" r="1.5"/><circle cx="7" cy="-14" r="1.5"/></g><g transform="translate(198.3,447.8) rotate(38) scale(1.09)"><circle cx="-28" cy="12" r="18"/><circle cx="30" cy="12" r="18"/><path d="M-28 12 l16 -30 h30 l12 30 M-12 -18 l16 30 l22 -30 M-16 -26 h10 M14 -24 l6 -8 h8"/></g><g transform="translate(284.9,36.9) rotate(-25) scale(1.01)"><path d="M-24 -16 l16 -6 l16 6 l16 -6 v36 l-16 6 l-16 -6 l-16 6z M-8 -22 v36 M8 -16 v36"/></g><g transform="translate(287.9,121.6) rotate(39) scale(1.24)"><path d="M0 -12 q2 10 12 12 q-10 2 -12 12 q-2 -10 -12 -12 q10 -2 12 -12z"/></g><g transform="translate(275.4,196.1) rotate(26) scale(1.21)"><path d="M-18 20 v-20 q0 -20 18 -20 q18 0 18 20 v20 l-6 -5 l-6 5 l-6 -5 l-6 5 l-6 -5z"/><circle cx="-6" cy="-4" r="2"/><circle cx="6" cy="-4" r="2"/></g><g transform="translate(278.2,273.2) rotate(-21) scale(1.20)"><rect x="-20" y="-12" width="40" height="28" rx="6"/><circle cx="0" cy="2" r="9"/><circle cx="0" cy="2" r="3"/><path d="M-8 -12 l3 -6 h10 l3 6"/></g><g transform="translate(281.6,357.9) rotate(7) scale(1.04)"><path d="M0 14 C-22 -2 -18 -20 -7 -20 C-3 -20 0 -16 0 -12 C0 -16 3 -20 7 -20 C18 -20 22 -2 0 14z"/></g><g transform="translate(285.3,434.2) rotate(-28) scale(1.06)"><circle cx="0" cy="0" r="22"/><path d="M-10 -8 q3 -4 6 0 M4 -8 q3 -4 6 0 M-12 6 q12 12 24 0z"/></g><g transform="translate(366.5,45.1) rotate(-27) scale(1.25)"><rect x="-20" y="-12" width="40" height="28" rx="6"/><circle cx="0" cy="2" r="9"/><circle cx="0" cy="2" r="3"/><path d="M-8 -12 l3 -6 h10 l3 6"/></g><g transform="translate(362.1,120.9) rotate(31) scale(1.33)"><rect x="-16" y="-22" width="32" height="44" rx="3"/><path d="M-10 -22 v44 M-4 -10 h14 M-4 -4 h14"/></g><g transform="translate(361.7,198.7) rotate(1) scale(1.04)"><circle cx="-16" cy="-14" r="8"/><circle cx="6" cy="-18" r="9"/><circle cx="24" cy="-12" r="7"/><path d="M-34 14 q2 -18 18 -18 q8 0 12 6 M-10 18 q0 -24 16 -24 q16 0 16 24z M18 -2 q16 0 18 16"/></g><g transform="translate(356.1,283.8) rotate(26) scale(1.09)"><circle cx="0" cy="0" r="22"/><path d="M-10 -8 q3 -4 6 0 M4 -8 q3 -4 6 0 M-12 6 q12 12 24 0z"/></g><g transform="translate(361.5,356.7) rotate(38) scale(1.33)"><path d="M-18 -6 q0 -20 18 -20 q18 0 18 20z M-14 -28 l-6 -8 M14 -28 l6 -8"/><rect x="-18" y="0" width="36" height="30" rx="4"/><rect x="-30" y="0" width="8" height="24" rx="4"/><rect x="22" y="0" width="8" height="24" rx="4"/><circle cx="-7" cy="-14" r="1.5"/><circle cx="7" cy="-14" r="1.5"/></g><g transform="translate(354.0,439.7) rotate(9) scale(1.30)"><rect x="-16" y="-22" width="32" height="44" rx="3"/><path d="M-10 -22 v44 M-4 -10 h14 M-4 -4 h14"/></g><g transform="translate(436.5,46.7) rotate(-34) scale(1.26)"><rect x="-20" y="-12" width="40" height="28" rx="6"/><circle cx="0" cy="2" r="9"/><circle cx="0" cy="2" r="3"/><path d="M-8 -12 l3 -6 h10 l3 6"/></g><g transform="translate(438.6,116.0) rotate(-10) scale(1.06)"><circle cx="-28" cy="12" r="18"/><circle cx="30" cy="12" r="18"/><path d="M-28 12 l16 -30 h30 l12 30 M-12 -18 l16 30 l22 -30 M-16 -26 h10 M14 -24 l6 -8 h8"/></g><g transform="translate(441.2,194.1) rotate(-4) scale(1.05)"><path d="M-20 -14 h32 q0 30 -16 30 q-16 0 -16 -30z M12 -8 q10 0 10 8 q0 8 -10 8 M-26 18 h44"/><ellipse cx="-4" cy="-14" rx="16" ry="4"/></g><g transform="translate(437.3,283.7) rotate(-29) scale(1.45)"><path d="M0 -12 l3 8 h8 l-6 5 l2 9 l-7 -5 l-7 5 l2 -9 l-6 -5 h8z"/></g><g transform="translate(432.6,352.3) rotate(-15) scale(1.13)"><path d="M-24 -16 l16 -6 l16 6 l16 -6 v36 l-16 6 l-16 -6 l-16 6z M-8 -22 v36 M8 -16 v36"/></g><g transform="translate(432.5,441.6) rotate(18) scale(1.17)"><circle cx="-16" cy="-14" r="8"/><circle cx="6" cy="-18" r="9"/><circle cx="24" cy="-12" r="7"/><path d="M-34 14 q2 -18 18 -18 q8 0 12 6 M-10 18 q0 -24 16 -24 q16 0 16 24z M18 -2 q16 0 18 16"/></g><circle cx="133.9" cy="419.7" r="2.7"/><circle cx="229.4" cy="309.5" r="4.8"/><circle cx="309.6" cy="295.6" r="4.5"/><circle cx="384.3" cy="147.8" r="4.2"/><circle cx="378.4" cy="365.9" r="3.5"/><circle cx="332.0" cy="362.7" r="3.9"/><circle cx="262.5" cy="160.6" r="4.0"/><circle cx="255.7" cy="33.7" r="4.1"/><circle cx="417.2" cy="369.5" r="4.3"/><circle cx="163.1" cy="308.7" r="4.0"/><circle cx="185.0" cy="352.1" r="2.7"/><circle cx="315.1" cy="12.5" r="4.0"/><circle cx="202.0" cy="96.7" r="4.2"/><circle cx="208.8" cy="258.1" r="4.8"/><circle cx="107.4" cy="4.7" r="3.3"/><circle cx="284.8" cy="85.1" r="2.9"/><circle cx="380.4" cy="277.2" r="3.6"/><circle cx="374.5" cy="137.3" r="4.2"/><circle cx="83.4" cy="181.0" r="4.5"/><circle cx="384.0" cy="369.7" r="3.5"/><circle cx="244.9" cy="132.9" r="2.8"/><circle cx="208.5" cy="351.6" r="4.6"/><circle cx="298.7" cy="399.0" r="3.2"/><circle cx="71.0" cy="189.3" r="3.2"/><circle cx="89.9" cy="173.9" r="4.1"/><circle cx="207.4" cy="132.5" r="4.6"/><circle cx="412.5" cy="190.0" r="2.7"/><circle cx="13.2" cy="366.6" r="2.6"/><circle cx="297.6" cy="239.6" r="3.3"/><circle cx="332.4" cy="8.0" r="2.8"/><circle cx="191.0" cy="10.4" r="4.6"/><circle cx="99.7" cy="59.2" r="2.6"/><circle cx="264.3" cy="187.5" r="4.1"/><circle cx="275.1" cy="339.1" r="4.9"/><circle cx="287.5" cy="83.7" r="3.7"/><circle cx="75.0" cy="4.5" r="3.7"/><circle cx="300.0" cy="75.2" r="3.2"/><circle cx="145.2" cy="292.9" r="3.8"/><circle cx="258.1" cy="317.6" r="3.5"/><circle cx="332.6" cy="380.6" r="2.7"/><circle cx="391.7" cy="303.4" r="2.8"/><circle cx="190.5" cy="262.7" r="4.8"/><circle cx="158.3" cy="238.9" r="4.7"/><circle cx="334.6" cy="396.6" r="3.7"/><circle cx="273.6" cy="86.1" r="4.3"/><circle cx="343.7" cy="269.5" r="4.3"/><circle cx="89.6" cy="378.0" r="5.0"/><circle cx="410.5" cy="225.5" r="4.5"/><circle cx="134.6" cy="382.2" r="4.6"/><circle cx="146.4" cy="34.8" r="3.6"/><circle cx="231.1" cy="322.7" r="3.7"/><circle cx="11.9" cy="339.8" r="2.7"/><circle cx="335.9" cy="72.6" r="3.3"/><circle cx="330.9" cy="59.0" r="2.9"/><circle cx="216.9" cy="303.9" r="4.6"/><circle cx="289.5" cy="397.2" r="3.7"/><circle cx="398.6" cy="36.1" r="3.1"/><circle cx="221.2" cy="121.9" r="4.3"/><circle cx="268.3" cy="219.6" r="4.6"/><circle cx="235.2" cy="130.9" r="3.5"/><circle cx="355.0" cy="378.2" r="3.0"/><circle cx="357.3" cy="406.7" r="3.8"/><circle cx="240.7" cy="84.4" r="3.8"/><circle cx="211.3" cy="254.2" r="2.6"/><circle cx="407.2" cy="216.7" r="3.5"/><circle cx="336.4" cy="236.4" r="3.7"/><circle cx="290.2" cy="27.7" r="3.8"/><circle cx="173.8" cy="401.9" r="4.8"/><circle cx="113.1" cy="198.7" r="2.8"/><circle cx="182.1" cy="342.6" r="4.8"/></g><g transform="translate(0,0)"><g transform="translate(39.2,41.0) rotate(-4) scale(1.27)"><path d="M-24 -16 l16 -6 l16 6 l16 -6 v36 l-16 6 l-16 -6 l-16 6z M-8 -22 v36 M8 -16 v36"/></g><g transform="translate(45.7,115.0) rotate(10) scale(1.18)"><path d="M-18 20 v-20 q0 -20 18 -20 q18 0 18 20 v20 l-6 -5 l-6 5 l-6 -5 l-6 5 l-6 -5z"/><circle cx="-6" cy="-4" r="2"/><circle cx="6" cy="-4" r="2"/></g><g transform="translate(44.7,193.5) rotate(3) scale(1.05)"><path d="M-14 -20 q-6 6 -2 16 q8 20 24 28 q10 4 16 -2 l-8 -8 l-6 4 q-10 -6 -14 -14 l4 -6z"/></g><g transform="translate(46.2,282.2) rotate(37) scale(1.61)"><path d="M0 -12 q2 10 12 12 q-10 2 -12 12 q-2 -10 -12 -12 q10 -2 12 -12z"/></g><g transform="translate(42.5,361.8) rotate(27) scale(1.22)"><path d="M-18 -6 q0 -20 18 -20 q18 0 18 20z M-14 -28 l-6 -8 M14 -28 l6 -8"/><rect x="-18" y="0" width="36" height="30" rx="4"/><rect x="-30" y="0" width="8" height="24" rx="4"/><rect x="22" y="0" width="8" height="24" rx="4"/><circle cx="-7" cy="-14" r="1.5"/><circle cx="7" cy="-14" r="1.5"/></g><g transform="translate(33.0,432.6) rotate(-38) scale(1.08)"><path d="M-24 -16 l16 -6 l16 6 l16 -6 v36 l-16 6 l-16 -6 l-16 6z M-8 -22 v36 M8 -16 v36"/></g><g transform="translate(119.4,39.0) rotate(-21) scale(1.07)"><path d="M-14 10 q4 -4 4 -14 q0 -12 10 -12 q10 0 10 12 q0 10 4 14z M-4 14 q4 6 8 0"/></g><g transform="translate(116.7,112.1) rotate(-18) scale(1.16)"><circle cx="-16" cy="-14" r="8"/><circle cx="6" cy="-18" r="9"/><circle cx="24" cy="-12" r="7"/><path d="M-34 14 q2 -18 18 -18 q8 0 12 6 M-10 18 q0 -24 16 -24 q16 0 16 24z M18 -2 q16 0 18 16"/></g><g transform="translate(128.0,207.9) rotate(-20) scale(1.03)"><path d="M-14 10 q4 -4 4 -14 q0 -12 10 -12 q10 0 10 12 q0 10 4 14z M-4 14 q4 6 8 0"/></g><g transform="translate(124.1,280.2) rotate(21) scale(1.02)"><circle cx="-28" cy="12" r="18"/><circle cx="30" cy="12" r="18"/><path d="M-28 12 l16 -30 h30 l12 30 M-12 -18 l16 30 l22 -30 M-16 -26 h10 M14 -24 l6 -8 h8"/></g><g transform="translate(118.4,365.5) rotate(-39) scale(1.02)"><circle cx="0" cy="0" r="22"/><path d="M-10 -8 q3 -4 6 0 M4 -8 q3 -4 6 0 M-12 6 q12 12 24 0z"/></g><g transform="translate(123.0,435.4) rotate(-2) scale(1.32)"><path d="M-24 -16 l16 -6 l16 6 l16 -6 v36 l-16 6 l-16 -6 l-16 6z M-8 -22 v36 M8 -16 v36"/></g><g transform="translate(207.7,38.4) rotate(-24) scale(1.20)"><circle cx="-16" cy="-14" r="8"/><circle cx="6" cy="-18" r="9"/><circle cx="24" cy="-12" r="7"/><path d="M-34 14 q2 -18 18 -18 q8 0 12 6 M-10 18 q0 -24 16 -24 q16 0 16 24z M18 -2 q16 0 18 16"/></g><g transform="translate(202.8,117.4) rotate(37) scale(1.12)"><path d="M-14 -20 q-6 6 -2 16 q8 20 24 28 q10 4 16 -2 l-8 -8 l-6 4 q-10 -6 -14 -14 l4 -6z"/></g><g transform="translate(204.1,193.9) rotate(-39) scale(1.25)"><rect x="-20" y="-12" width="40" height="28" rx="6"/><circle cx="0" cy="2" r="9"/><circle cx="0" cy="2" r="3"/><path d="M-8 -12 l3 -6 h10 l3 6"/></g><g transform="translate(199.4,279.8) rotate(-4) scale(1.20)"><rect x="-16" y="-22" width="32" height="44" rx="3"/><path d="M-10 -22 v44 M-4 -10 h14 M-4 -4 h14"/></g><g transform="translate(195.1,363.7) rotate(-9) scale(1.15)"><path d="M-18 -6 q0 -20 18 -20 q18 0 18 20z M-14 -28 l-6 -8 M14 -28 l6 -8"/><rect x="-18" y="0" width="36" height="30" rx="4"/><rect x="-30" y="0" width="8" height="24" rx="4"/><rect x="22" y="0" width="8" height="24" rx="4"/><circle cx="-7" cy="-14" r="1.5"/><circle cx="7" cy="-14" r="1.5"/></g><g transform="translate(198.3,447.8) rotate(38) scale(1.09)"><circle cx="-28" cy="12" r="18"/><circle cx="30" cy="12" r="18"/><path d="M-28 12 l16 -30 h30 l12 30 M-12 -18 l16 30 l22 -30 M-16 -26 h10 M14 -24 l6 -8 h8"/></g><g transform="translate(284.9,36.9) rotate(-25) scale(1.01)"><path d="M-24 -16 l16 -6 l16 6 l16 -6 v36 l-16 6 l-16 -6 l-16 6z M-8 -22 v36 M8 -16 v36"/></g><g transform="translate(287.9,121.6) rotate(39) scale(1.24)"><path d="M0 -12 q2 10 12 12 q-10 2 -12 12 q-2 -10 -12 -12 q10 -2 12 -12z"/></g><g transform="translate(275.4,196.1) rotate(26) scale(1.21)"><path d="M-18 20 v-20 q0 -20 18 -20 q18 0 18 20 v20 l-6 -5 l-6 5 l-6 -5 l-6 5 l-6 -5z"/><circle cx="-6" cy="-4" r="2"/><circle cx="6" cy="-4" r="2"/></g><g transform="translate(278.2,273.2) rotate(-21) scale(1.20)"><rect x="-20" y="-12" width="40" height="28" rx="6"/><circle cx="0" cy="2" r="9"/><circle cx="0" cy="2" r="3"/><path d="M-8 -12 l3 -6 h10 l3 6"/></g><g transform="translate(281.6,357.9) rotate(7) scale(1.04)"><path d="M0 14 C-22 -2 -18 -20 -7 -20 C-3 -20 0 -16 0 -12 C0 -16 3 -20 7 -20 C18 -20 22 -2 0 14z"/></g><g transform="translate(285.3,434.2) rotate(-28) scale(1.06)"><circle cx="0" cy="0" r="22"/><path d="M-10 -8 q3 -4 6 0 M4 -8 q3 -4 6 0 M-12 6 q12 12 24 0z"/></g><g transform="translate(366.5,45.1) rotate(-27) scale(1.25)"><rect x="-20" y="-12" width="40" height="28" rx="6"/><circle cx="0" cy="2" r="9"/><circle cx="0" cy="2" r="3"/><path d="M-8 -12 l3 -6 h10 l3 6"/></g><g transform="translate(362.1,120.9) rotate(31) scale(1.33)"><rect x="-16" y="-22" width="32" height="44" rx="3"/><path d="M-10 -22 v44 M-4 -10 h14 M-4 -4 h14"/></g><g transform="translate(361.7,198.7) rotate(1) scale(1.04)"><circle cx="-16" cy="-14" r="8"/><circle cx="6" cy="-18" r="9"/><circle cx="24" cy="-12" r="7"/><path d="M-34 14 q2 -18 18 -18 q8 0 12 6 M-10 18 q0 -24 16 -24 q16 0 16 24z M18 -2 q16 0 18 16"/></g><g transform="translate(356.1,283.8) rotate(26) scale(1.09)"><circle cx="0" cy="0" r="22"/><path d="M-10 -8 q3 -4 6 0 M4 -8 q3 -4 6 0 M-12 6 q12 12 24 0z"/></g><g transform="translate(361.5,356.7) rotate(38) scale(1.33)"><path d="M-18 -6 q0 -20 18 -20 q18 0 18 20z M-14 -28 l-6 -8 M14 -28 l6 -8"/><rect x="-18" y="0" width="36" height="30" rx="4"/><rect x="-30" y="0" width="8" height="24" rx="4"/><rect x="22" y="0" width="8" height="24" rx="4"/><circle cx="-7" cy="-14" r="1.5"/><circle cx="7" cy="-14" r="1.5"/></g><g transform="translate(354.0,439.7) rotate(9) scale(1.30)"><rect x="-16" y="-22" width="32" height="44" rx="3"/><path d="M-10 -22 v44 M-4 -10 h14 M-4 -4 h14"/></g><g transform="translate(436.5,46.7) rotate(-34) scale(1.26)"><rect x="-20" y="-12" width="40" height="28" rx="6"/><circle cx="0" cy="2" r="9"/><circle cx="0" cy="2" r="3"/><path d="M-8 -12 l3 -6 h10 l3 6"/></g><g transform="translate(438.6,116.0) rotate(-10) scale(1.06)"><circle cx="-28" cy="12" r="18"/><circle cx="30" cy="12" r="18"/><path d="M-28 12 l16 -30 h30 l12 30 M-12 -18 l16 30 l22 -30 M-16 -26 h10 M14 -24 l6 -8 h8"/></g><g transform="translate(441.2,194.1) rotate(-4) scale(1.05)"><path d="M-20 -14 h32 q0 30 -16 30 q-16 0 -16 -30z M12 -8 q10 0 10 8 q0 8 -10 8 M-26 18 h44"/><ellipse cx="-4" cy="-14" rx="16" ry="4"/></g><g transform="translate(437.3,283.7) rotate(-29) scale(1.45)"><path d="M0 -12 l3 8 h8 l-6 5 l2 9 l-7 -5 l-7 5 l2 -9 l-6 -5 h8z"/></g><g transform="translate(432.6,352.3) rotate(-15) scale(1.13)"><path d="M-24 -16 l16 -6 l16 6 l16 -6 v36 l-16 6 l-16 -6 l-16 6z M-8 -22 v36 M8 -16 v36"/></g><g transform="translate(432.5,441.6) rotate(18) scale(1.17)"><circle cx="-16" cy="-14" r="8"/><circle cx="6" cy="-18" r="9"/><circle cx="24" cy="-12" r="7"/><path d="M-34 14 q2 -18 18 -18 q8 0 12 6 M-10 18 q0 -24 16 -24 q16 0 16 24z M18 -2 q16 0 18 16"/></g><circle cx="133.9" cy="419.7" r="2.7"/><circle cx="229.4" cy="309.5" r="4.8"/><circle cx="309.6" cy="295.6" r="4.5"/><circle cx="384.3" cy="147.8" r="4.2"/><circle cx="378.4" cy="365.9" r="3.5"/><circle cx="332.0" cy="362.7" r="3.9"/><circle cx="262.5" cy="160.6" r="4.0"/><circle cx="255.7" cy="33.7" r="4.1"/><circle cx="417.2" cy="369.5" r="4.3"/><circle cx="163.1" cy="308.7" r="4.0"/><circle cx="185.0" cy="352.1" r="2.7"/><circle cx="315.1" cy="12.5" r="4.0"/><circle cx="202.0" cy="96.7" r="4.2"/><circle cx="208.8" cy="258.1" r="4.8"/><circle cx="107.4" cy="4.7" r="3.3"/><circle cx="284.8" cy="85.1" r="2.9"/><circle cx="380.4" cy="277.2" r="3.6"/><circle cx="374.5" cy="137.3" r="4.2"/><circle cx="83.4" cy="181.0" r="4.5"/><circle cx="384.0" cy="369.7" r="3.5"/><circle cx="244.9" cy="132.9" r="2.8"/><circle cx="208.5" cy="351.6" r="4.6"/><circle cx="298.7" cy="399.0" r="3.2"/><circle cx="71.0" cy="189.3" r="3.2"/><circle cx="89.9" cy="173.9" r="4.1"/><circle cx="207.4" cy="132.5" r="4.6"/><circle cx="412.5" cy="190.0" r="2.7"/><circle cx="13.2" cy="366.6" r="2.6"/><circle cx="297.6" cy="239.6" r="3.3"/><circle cx="332.4" cy="8.0" r="2.8"/><circle cx="191.0" cy="10.4" r="4.6"/><circle cx="99.7" cy="59.2" r="2.6"/><circle cx="264.3" cy="187.5" r="4.1"/><circle cx="275.1" cy="339.1" r="4.9"/><circle cx="287.5" cy="83.7" r="3.7"/><circle cx="75.0" cy="4.5" r="3.7"/><circle cx="300.0" cy="75.2" r="3.2"/><circle cx="145.2" cy="292.9" r="3.8"/><circle cx="258.1" cy="317.6" r="3.5"/><circle cx="332.6" cy="380.6" r="2.7"/><circle cx="391.7" cy="303.4" r="2.8"/><circle cx="190.5" cy="262.7" r="4.8"/><circle cx="158.3" cy="238.9" r="4.7"/><circle cx="334.6" cy="396.6" r="3.7"/><circle cx="273.6" cy="86.1" r="4.3"/><circle cx="343.7" cy="269.5" r="4.3"/><circle cx="89.6" cy="378.0" r="5.0"/><circle cx="410.5" cy="225.5" r="4.5"/><circle cx="134.6" cy="382.2" r="4.6"/><circle cx="146.4" cy="34.8" r="3.6"/><circle cx="231.1" cy="322.7" r="3.7"/><circle cx="11.9" cy="339.8" r="2.7"/><circle cx="335.9" cy="72.6" r="3.3"/><circle cx="330.9" cy="59.0" r="2.9"/><circle cx="216.9" cy="303.9" r="4.6"/><circle cx="289.5" cy="397.2" r="3.7"/><circle cx="398.6" cy="36.1" r="3.1"/><circle cx="221.2" cy="121.9" r="4.3"/><circle cx="268.3" cy="219.6" r="4.6"/><circle cx="235.2" cy="130.9" r="3.5"/><circle cx="355.0" cy="378.2" r="3.0"/><circle cx="357.3" cy="406.7" r="3.8"/><circle cx="240.7" cy="84.4" r="3.8"/><circle cx="211.3" cy="254.2" r="2.6"/><circle cx="407.2" cy="216.7" r="3.5"/><circle cx="336.4" cy="236.4" r="3.7"/><circle cx="290.2" cy="27.7" r="3.8"/><circle cx="173.8" cy="401.9" r="4.8"/><circle cx="113.1" cy="198.7" r="2.8"/><circle cx="182.1" cy="342.6" r="4.8"/></g><g transform="translate(0,420)"><g transform="translate(39.2,41.0) rotate(-4) scale(1.27)"><path d="M-24 -16 l16 -6 l16 6 l16 -6 v36 l-16 6 l-16 -6 l-16 6z M-8 -22 v36 M8 -16 v36"/></g><g transform="translate(45.7,115.0) rotate(10) scale(1.18)"><path d="M-18 20 v-20 q0 -20 18 -20 q18 0 18 20 v20 l-6 -5 l-6 5 l-6 -5 l-6 5 l-6 -5z"/><circle cx="-6" cy="-4" r="2"/><circle cx="6" cy="-4" r="2"/></g><g transform="translate(44.7,193.5) rotate(3) scale(1.05)"><path d="M-14 -20 q-6 6 -2 16 q8 20 24 28 q10 4 16 -2 l-8 -8 l-6 4 q-10 -6 -14 -14 l4 -6z"/></g><g transform="translate(46.2,282.2) rotate(37) scale(1.61)"><path d="M0 -12 q2 10 12 12 q-10 2 -12 12 q-2 -10 -12 -12 q10 -2 12 -12z"/></g><g transform="translate(42.5,361.8) rotate(27) scale(1.22)"><path d="M-18 -6 q0 -20 18 -20 q18 0 18 20z M-14 -28 l-6 -8 M14 -28 l6 -8"/><rect x="-18" y="0" width="36" height="30" rx="4"/><rect x="-30" y="0" width="8" height="24" rx="4"/><rect x="22" y="0" width="8" height="24" rx="4"/><circle cx="-7" cy="-14" r="1.5"/><circle cx="7" cy="-14" r="1.5"/></g><g transform="translate(33.0,432.6) rotate(-38) scale(1.08)"><path d="M-24 -16 l16 -6 l16 6 l16 -6 v36 l-16 6 l-16 -6 l-16 6z M-8 -22 v36 M8 -16 v36"/></g><g transform="translate(119.4,39.0) rotate(-21) scale(1.07)"><path d="M-14 10 q4 -4 4 -14 q0 -12 10 -12 q10 0 10 12 q0 10 4 14z M-4 14 q4 6 8 0"/></g><g transform="translate(116.7,112.1) rotate(-18) scale(1.16)"><circle cx="-16" cy="-14" r="8"/><circle cx="6" cy="-18" r="9"/><circle cx="24" cy="-12" r="7"/><path d="M-34 14 q2 -18 18 -18 q8 0 12 6 M-10 18 q0 -24 16 -24 q16 0 16 24z M18 -2 q16 0 18 16"/></g><g transform="translate(128.0,207.9) rotate(-20) scale(1.03)"><path d="M-14 10 q4 -4 4 -14 q0 -12 10 -12 q10 0 10 12 q0 10 4 14z M-4 14 q4 6 8 0"/></g><g transform="translate(124.1,280.2) rotate(21) scale(1.02)"><circle cx="-28" cy="12" r="18"/><circle cx="30" cy="12" r="18"/><path d="M-28 12 l16 -30 h30 l12 30 M-12 -18 l16 30 l22 -30 M-16 -26 h10 M14 -24 l6 -8 h8"/></g><g transform="translate(118.4,365.5) rotate(-39) scale(1.02)"><circle cx="0" cy="0" r="22"/><path d="M-10 -8 q3 -4 6 0 M4 -8 q3 -4 6 0 M-12 6 q12 12 24 0z"/></g><g transform="translate(123.0,435.4) rotate(-2) scale(1.32)"><path d="M-24 -16 l16 -6 l16 6 l16 -6 v36 l-16 6 l-16 -6 l-16 6z M-8 -22 v36 M8 -16 v36"/></g><g transform="translate(207.7,38.4) rotate(-24) scale(1.20)"><circle cx="-16" cy="-14" r="8"/><circle cx="6" cy="-18" r="9"/><circle cx="24" cy="-12" r="7"/><path d="M-34 14 q2 -18 18 -18 q8 0 12 6 M-10 18 q0 -24 16 -24 q16 0 16 24z M18 -2 q16 0 18 16"/></g><g transform="translate(202.8,117.4) rotate(37) scale(1.12)"><path d="M-14 -20 q-6 6 -2 16 q8 20 24 28 q10 4 16 -2 l-8 -8 l-6 4 q-10 -6 -14 -14 l4 -6z"/></g><g transform="translate(204.1,193.9) rotate(-39) scale(1.25)"><rect x="-20" y="-12" width="40" height="28" rx="6"/><circle cx="0" cy="2" r="9"/><circle cx="0" cy="2" r="3"/><path d="M-8 -12 l3 -6 h10 l3 6"/></g><g transform="translate(199.4,279.8) rotate(-4) scale(1.20)"><rect x="-16" y="-22" width="32" height="44" rx="3"/><path d="M-10 -22 v44 M-4 -10 h14 M-4 -4 h14"/></g><g transform="translate(195.1,363.7) rotate(-9) scale(1.15)"><path d="M-18 -6 q0 -20 18 -20 q18 0 18 20z M-14 -28 l-6 -8 M14 -28 l6 -8"/><rect x="-18" y="0" width="36" height="30" rx="4"/><rect x="-30" y="0" width="8" height="24" rx="4"/><rect x="22" y="0" width="8" height="24" rx="4"/><circle cx="-7" cy="-14" r="1.5"/><circle cx="7" cy="-14" r="1.5"/></g><g transform="translate(198.3,447.8) rotate(38) scale(1.09)"><circle cx="-28" cy="12" r="18"/><circle cx="30" cy="12" r="18"/><path d="M-28 12 l16 -30 h30 l12 30 M-12 -18 l16 30 l22 -30 M-16 -26 h10 M14 -24 l6 -8 h8"/></g><g transform="translate(284.9,36.9) rotate(-25) scale(1.01)"><path d="M-24 -16 l16 -6 l16 6 l16 -6 v36 l-16 6 l-16 -6 l-16 6z M-8 -22 v36 M8 -16 v36"/></g><g transform="translate(287.9,121.6) rotate(39) scale(1.24)"><path d="M0 -12 q2 10 12 12 q-10 2 -12 12 q-2 -10 -12 -12 q10 -2 12 -12z"/></g><g transform="translate(275.4,196.1) rotate(26) scale(1.21)"><path d="M-18 20 v-20 q0 -20 18 -20 q18 0 18 20 v20 l-6 -5 l-6 5 l-6 -5 l-6 5 l-6 -5z"/><circle cx="-6" cy="-4" r="2"/><circle cx="6" cy="-4" r="2"/></g><g transform="translate(278.2,273.2) rotate(-21) scale(1.20)"><rect x="-20" y="-12" width="40" height="28" rx="6"/><circle cx="0" cy="2" r="9"/><circle cx="0" cy="2" r="3"/><path d="M-8 -12 l3 -6 h10 l3 6"/></g><g transform="translate(281.6,357.9) rotate(7) scale(1.04)"><path d="M0 14 C-22 -2 -18 -20 -7 -20 C-3 -20 0 -16 0 -12 C0 -16 3 -20 7 -20 C18 -20 22 -2 0 14z"/></g><g transform="translate(285.3,434.2) rotate(-28) scale(1.06)"><circle cx="0" cy="0" r="22"/><path d="M-10 -8 q3 -4 6 0 M4 -8 q3 -4 6 0 M-12 6 q12 12 24 0z"/></g><g transform="translate(366.5,45.1) rotate(-27) scale(1.25)"><rect x="-20" y="-12" width="40" height="28" rx="6"/><circle cx="0" cy="2" r="9"/><circle cx="0" cy="2" r="3"/><path d="M-8 -12 l3 -6 h10 l3 6"/></g><g transform="translate(362.1,120.9) rotate(31) scale(1.33)"><rect x="-16" y="-22" width="32" height="44" rx="3"/><path d="M-10 -22 v44 M-4 -10 h14 M-4 -4 h14"/></g><g transform="translate(361.7,198.7) rotate(1) scale(1.04)"><circle cx="-16" cy="-14" r="8"/><circle cx="6" cy="-18" r="9"/><circle cx="24" cy="-12" r="7"/><path d="M-34 14 q2 -18 18 -18 q8 0 12 6 M-10 18 q0 -24 16 -24 q16 0 16 24z M18 -2 q16 0 18 16"/></g><g transform="translate(356.1,283.8) rotate(26) scale(1.09)"><circle cx="0" cy="0" r="22"/><path d="M-10 -8 q3 -4 6 0 M4 -8 q3 -4 6 0 M-12 6 q12 12 24 0z"/></g><g transform="translate(361.5,356.7) rotate(38) scale(1.33)"><path d="M-18 -6 q0 -20 18 -20 q18 0 18 20z M-14 -28 l-6 -8 M14 -28 l6 -8"/><rect x="-18" y="0" width="36" height="30" rx="4"/><rect x="-30" y="0" width="8" height="24" rx="4"/><rect x="22" y="0" width="8" height="24" rx="4"/><circle cx="-7" cy="-14" r="1.5"/><circle cx="7" cy="-14" r="1.5"/></g><g transform="translate(354.0,439.7) rotate(9) scale(1.30)"><rect x="-16" y="-22" width="32" height="44" rx="3"/><path d="M-10 -22 v44 M-4 -10 h14 M-4 -4 h14"/></g><g transform="translate(436.5,46.7) rotate(-34) scale(1.26)"><rect x="-20" y="-12" width="40" height="28" rx="6"/><circle cx="0" cy="2" r="9"/><circle cx="0" cy="2" r="3"/><path d="M-8 -12 l3 -6 h10 l3 6"/></g><g transform="translate(438.6,116.0) rotate(-10) scale(1.06)"><circle cx="-28" cy="12" r="18"/><circle cx="30" cy="12" r="18"/><path d="M-28 12 l16 -30 h30 l12 30 M-12 -18 l16 30 l22 -30 M-16 -26 h10 M14 -24 l6 -8 h8"/></g><g transform="translate(441.2,194.1) rotate(-4) scale(1.05)"><path d="M-20 -14 h32 q0 30 -16 30 q-16 0 -16 -30z M12 -8 q10 0 10 8 q0 8 -10 8 M-26 18 h44"/><ellipse cx="-4" cy="-14" rx="16" ry="4"/></g><g transform="translate(437.3,283.7) rotate(-29) scale(1.45)"><path d="M0 -12 l3 8 h8 l-6 5 l2 9 l-7 -5 l-7 5 l2 -9 l-6 -5 h8z"/></g><g transform="translate(432.6,352.3) rotate(-15) scale(1.13)"><path d="M-24 -16 l16 -6 l16 6 l16 -6 v36 l-16 6 l-16 -6 l-16 6z M-8 -22 v36 M8 -16 v36"/></g><g transform="translate(432.5,441.6) rotate(18) scale(1.17)"><circle cx="-16" cy="-14" r="8"/><circle cx="6" cy="-18" r="9"/><circle cx="24" cy="-12" r="7"/><path d="M-34 14 q2 -18 18 -18 q8 0 12 6 M-10 18 q0 -24 16 -24 q16 0 16 24z M18 -2 q16 0 18 16"/></g><circle cx="133.9" cy="419.7" r="2.7"/><circle cx="229.4" cy="309.5" r="4.8"/><circle cx="309.6" cy="295.6" r="4.5"/><circle cx="384.3" cy="147.8" r="4.2"/><circle cx="378.4" cy="365.9" r="3.5"/><circle cx="332.0" cy="362.7" r="3.9"/><circle cx="262.5" cy="160.6" r="4.0"/><circle cx="255.7" cy="33.7" r="4.1"/><circle cx="417.2" cy="369.5" r="4.3"/><circle cx="163.1" cy="308.7" r="4.0"/><circle cx="185.0" cy="352.1" r="2.7"/><circle cx="315.1" cy="12.5" r="4.0"/><circle cx="202.0" cy="96.7" r="4.2"/><circle cx="208.8" cy="258.1" r="4.8"/><circle cx="107.4" cy="4.7" r="3.3"/><circle cx="284.8" cy="85.1" r="2.9"/><circle cx="380.4" cy="277.2" r="3.6"/><circle cx="374.5" cy="137.3" r="4.2"/><circle cx="83.4" cy="181.0" r="4.5"/><circle cx="384.0" cy="369.7" r="3.5"/><circle cx="244.9" cy="132.9" r="2.8"/><circle cx="208.5" cy="351.6" r="4.6"/><circle cx="298.7" cy="399.0" r="3.2"/><circle cx="71.0" cy="189.3" r="3.2"/><circle cx="89.9" cy="173.9" r="4.1"/><circle cx="207.4" cy="132.5" r="4.6"/><circle cx="412.5" cy="190.0" r="2.7"/><circle cx="13.2" cy="366.6" r="2.6"/><circle cx="297.6" cy="239.6" r="3.3"/><circle cx="332.4" cy="8.0" r="2.8"/><circle cx="191.0" cy="10.4" r="4.6"/><circle cx="99.7" cy="59.2" r="2.6"/><circle cx="264.3" cy="187.5" r="4.1"/><circle cx="275.1" cy="339.1" r="4.9"/><circle cx="287.5" cy="83.7" r="3.7"/><circle cx="75.0" cy="4.5" r="3.7"/><circle cx="300.0" cy="75.2" r="3.2"/><circle cx="145.2" cy="292.9" r="3.8"/><circle cx="258.1" cy="317.6" r="3.5"/><circle cx="332.6" cy="380.6" r="2.7"/><circle cx="391.7" cy="303.4" r="2.8"/><circle cx="190.5" cy="262.7" r="4.8"/><circle cx="158.3" cy="238.9" r="4.7"/><circle cx="334.6" cy="396.6" r="3.7"/><circle cx="273.6" cy="86.1" r="4.3"/><circle cx="343.7" cy="269.5" r="4.3"/><circle cx="89.6" cy="378.0" r="5.0"/><circle cx="410.5" cy="225.5" r="4.5"/><circle cx="134.6" cy="382.2" r="4.6"/><circle cx="146.4" cy="34.8" r="3.6"/><circle cx="231.1" cy="322.7" r="3.7"/><circle cx="11.9" cy="339.8" r="2.7"/><circle cx="335.9" cy="72.6" r="3.3"/><circle cx="330.9" cy="59.0" r="2.9"/><circle cx="216.9" cy="303.9" r="4.6"/><circle cx="289.5" cy="397.2" r="3.7"/><circle cx="398.6" cy="36.1" r="3.1"/><circle cx="221.2" cy="121.9" r="4.3"/><circle cx="268.3" cy="219.6" r="4.6"/><circle cx="235.2" cy="130.9" r="3.5"/><circle cx="355.0" cy="378.2" r="3.0"/><circle cx="357.3" cy="406.7" r="3.8"/><circle cx="240.7" cy="84.4" r="3.8"/><circle cx="211.3" cy="254.2" r="2.6"/><circle cx="407.2" cy="216.7" r="3.5"/><circle cx="336.4" cy="236.4" r="3.7"/><circle cx="290.2" cy="27.7" r="3.8"/><circle cx="173.8" cy="401.9" r="4.8"/><circle cx="113.1" cy="198.7" r="2.8"/><circle cx="182.1" cy="342.6" r="4.8"/></g><g transform="translate(420,-420)"><g transform="translate(39.2,41.0) rotate(-4) scale(1.27)"><path d="M-24 -16 l16 -6 l16 6 l16 -6 v36 l-16 6 l-16 -6 l-16 6z M-8 -22 v36 M8 -16 v36"/></g><g transform="translate(45.7,115.0) rotate(10) scale(1.18)"><path d="M-18 20 v-20 q0 -20 18 -20 q18 0 18 20 v20 l-6 -5 l-6 5 l-6 -5 l-6 5 l-6 -5z"/><circle cx="-6" cy="-4" r="2"/><circle cx="6" cy="-4" r="2"/></g><g transform="translate(44.7,193.5) rotate(3) scale(1.05)"><path d="M-14 -20 q-6 6 -2 16 q8 20 24 28 q10 4 16 -2 l-8 -8 l-6 4 q-10 -6 -14 -14 l4 -6z"/></g><g transform="translate(46.2,282.2) rotate(37) scale(1.61)"><path d="M0 -12 q2 10 12 12 q-10 2 -12 12 q-2 -10 -12 -12 q10 -2 12 -12z"/></g><g transform="translate(42.5,361.8) rotate(27) scale(1.22)"><path d="M-18 -6 q0 -20 18 -20 q18 0 18 20z M-14 -28 l-6 -8 M14 -28 l6 -8"/><rect x="-18" y="0" width="36" height="30" rx="4"/><rect x="-30" y="0" width="8" height="24" rx="4"/><rect x="22" y="0" width="8" height="24" rx="4"/><circle cx="-7" cy="-14" r="1.5"/><circle cx="7" cy="-14" r="1.5"/></g><g transform="translate(33.0,432.6) rotate(-38) scale(1.08)"><path d="M-24 -16 l16 -6 l16 6 l16 -6 v36 l-16 6 l-16 -6 l-16 6z M-8 -22 v36 M8 -16 v36"/></g><g transform="translate(119.4,39.0) rotate(-21) scale(1.07)"><path d="M-14 10 q4 -4 4 -14 q0 -12 10 -12 q10 0 10 12 q0 10 4 14z M-4 14 q4 6 8 0"/></g><g transform="translate(116.7,112.1) rotate(-18) scale(1.16)"><circle cx="-16" cy="-14" r="8"/><circle cx="6" cy="-18" r="9"/><circle cx="24" cy="-12" r="7"/><path d="M-34 14 q2 -18 18 -18 q8 0 12 6 M-10 18 q0 -24 16 -24 q16 0 16 24z M18 -2 q16 0 18 16"/></g><g transform="translate(128.0,207.9) rotate(-20) scale(1.03)"><path d="M-14 10 q4 -4 4 -14 q0 -12 10 -12 q10 0 10 12 q0 10 4 14z M-4 14 q4 6 8 0"/></g><g transform="translate(124.1,280.2) rotate(21) scale(1.02)"><circle cx="-28" cy="12" r="18"/><circle cx="30" cy="12" r="18"/><path d="M-28 12 l16 -30 h30 l12 30 M-12 -18 l16 30 l22 -30 M-16 -26 h10 M14 -24 l6 -8 h8"/></g><g transform="translate(118.4,365.5) rotate(-39) scale(1.02)"><circle cx="0" cy="0" r="22"/><path d="M-10 -8 q3 -4 6 0 M4 -8 q3 -4 6 0 M-12 6 q12 12 24 0z"/></g><g transform="translate(123.0,435.4) rotate(-2) scale(1.32)"><path d="M-24 -16 l16 -6 l16 6 l16 -6 v36 l-16 6 l-16 -6 l-16 6z M-8 -22 v36 M8 -16 v36"/></g><g transform="translate(207.7,38.4) rotate(-24) scale(1.20)"><circle cx="-16" cy="-14" r="8"/><circle cx="6" cy="-18" r="9"/><circle cx="24" cy="-12" r="7"/><path d="M-34 14 q2 -18 18 -18 q8 0 12 6 M-10 18 q0 -24 16 -24 q16 0 16 24z M18 -2 q16 0 18 16"/></g><g transform="translate(202.8,117.4) rotate(37) scale(1.12)"><path d="M-14 -20 q-6 6 -2 16 q8 20 24 28 q10 4 16 -2 l-8 -8 l-6 4 q-10 -6 -14 -14 l4 -6z"/></g><g transform="translate(204.1,193.9) rotate(-39) scale(1.25)"><rect x="-20" y="-12" width="40" height="28" rx="6"/><circle cx="0" cy="2" r="9"/><circle cx="0" cy="2" r="3"/><path d="M-8 -12 l3 -6 h10 l3 6"/></g><g transform="translate(199.4,279.8) rotate(-4) scale(1.20)"><rect x="-16" y="-22" width="32" height="44" rx="3"/><path d="M-10 -22 v44 M-4 -10 h14 M-4 -4 h14"/></g><g transform="translate(195.1,363.7) rotate(-9) scale(1.15)"><path d="M-18 -6 q0 -20 18 -20 q18 0 18 20z M-14 -28 l-6 -8 M14 -28 l6 -8"/><rect x="-18" y="0" width="36" height="30" rx="4"/><rect x="-30" y="0" width="8" height="24" rx="4"/><rect x="22" y="0" width="8" height="24" rx="4"/><circle cx="-7" cy="-14" r="1.5"/><circle cx="7" cy="-14" r="1.5"/></g><g transform="translate(198.3,447.8) rotate(38) scale(1.09)"><circle cx="-28" cy="12" r="18"/><circle cx="30" cy="12" r="18"/><path d="M-28 12 l16 -30 h30 l12 30 M-12 -18 l16 30 l22 -30 M-16 -26 h10 M14 -24 l6 -8 h8"/></g><g transform="translate(284.9,36.9) rotate(-25) scale(1.01)"><path d="M-24 -16 l16 -6 l16 6 l16 -6 v36 l-16 6 l-16 -6 l-16 6z M-8 -22 v36 M8 -16 v36"/></g><g transform="translate(287.9,121.6) rotate(39) scale(1.24)"><path d="M0 -12 q2 10 12 12 q-10 2 -12 12 q-2 -10 -12 -12 q10 -2 12 -12z"/></g><g transform="translate(275.4,196.1) rotate(26) scale(1.21)"><path d="M-18 20 v-20 q0 -20 18 -20 q18 0 18 20 v20 l-6 -5 l-6 5 l-6 -5 l-6 5 l-6 -5z"/><circle cx="-6" cy="-4" r="2"/><circle cx="6" cy="-4" r="2"/></g><g transform="translate(278.2,273.2) rotate(-21) scale(1.20)"><rect x="-20" y="-12" width="40" height="28" rx="6"/><circle cx="0" cy="2" r="9"/><circle cx="0" cy="2" r="3"/><path d="M-8 -12 l3 -6 h10 l3 6"/></g><g transform="translate(281.6,357.9) rotate(7) scale(1.04)"><path d="M0 14 C-22 -2 -18 -20 -7 -20 C-3 -20 0 -16 0 -12 C0 -16 3 -20 7 -20 C18 -20 22 -2 0 14z"/></g><g transform="translate(285.3,434.2) rotate(-28) scale(1.06)"><circle cx="0" cy="0" r="22"/><path d="M-10 -8 q3 -4 6 0 M4 -8 q3 -4 6 0 M-12 6 q12 12 24 0z"/></g><g transform="translate(366.5,45.1) rotate(-27) scale(1.25)"><rect x="-20" y="-12" width="40" height="28" rx="6"/><circle cx="0" cy="2" r="9"/><circle cx="0" cy="2" r="3"/><path d="M-8 -12 l3 -6 h10 l3 6"/></g><g transform="translate(362.1,120.9) rotate(31) scale(1.33)"><rect x="-16" y="-22" width="32" height="44" rx="3"/><path d="M-10 -22 v44 M-4 -10 h14 M-4 -4 h14"/></g><g transform="translate(361.7,198.7) rotate(1) scale(1.04)"><circle cx="-16" cy="-14" r="8"/><circle cx="6" cy="-18" r="9"/><circle cx="24" cy="-12" r="7"/><path d="M-34 14 q2 -18 18 -18 q8 0 12 6 M-10 18 q0 -24 16 -24 q16 0 16 24z M18 -2 q16 0 18 16"/></g><g transform="translate(356.1,283.8) rotate(26) scale(1.09)"><circle cx="0" cy="0" r="22"/><path d="M-10 -8 q3 -4 6 0 M4 -8 q3 -4 6 0 M-12 6 q12 12 24 0z"/></g><g transform="translate(361.5,356.7) rotate(38) scale(1.33)"><path d="M-18 -6 q0 -20 18 -20 q18 0 18 20z M-14 -28 l-6 -8 M14 -28 l6 -8"/><rect x="-18" y="0" width="36" height="30" rx="4"/><rect x="-30" y="0" width="8" height="24" rx="4"/><rect x="22" y="0" width="8" height="24" rx="4"/><circle cx="-7" cy="-14" r="1.5"/><circle cx="7" cy="-14" r="1.5"/></g><g transform="translate(354.0,439.7) rotate(9) scale(1.30)"><rect x="-16" y="-22" width="32" height="44" rx="3"/><path d="M-10 -22 v44 M-4 -10 h14 M-4 -4 h14"/></g><g transform="translate(436.5,46.7) rotate(-34) scale(1.26)"><rect x="-20" y="-12" width="40" height="28" rx="6"/><circle cx="0" cy="2" r="9"/><circle cx="0" cy="2" r="3"/><path d="M-8 -12 l3 -6 h10 l3 6"/></g><g transform="translate(438.6,116.0) rotate(-10) scale(1.06)"><circle cx="-28" cy="12" r="18"/><circle cx="30" cy="12" r="18"/><path d="M-28 12 l16 -30 h30 l12 30 M-12 -18 l16 30 l22 -30 M-16 -26 h10 M14 -24 l6 -8 h8"/></g><g transform="translate(441.2,194.1) rotate(-4) scale(1.05)"><path d="M-20 -14 h32 q0 30 -16 30 q-16 0 -16 -30z M12 -8 q10 0 10 8 q0 8 -10 8 M-26 18 h44"/><ellipse cx="-4" cy="-14" rx="16" ry="4"/></g><g transform="translate(437.3,283.7) rotate(-29) scale(1.45)"><path d="M0 -12 l3 8 h8 l-6 5 l2 9 l-7 -5 l-7 5 l2 -9 l-6 -5 h8z"/></g><g transform="translate(432.6,352.3) rotate(-15) scale(1.13)"><path d="M-24 -16 l16 -6 l16 6 l16 -6 v36 l-16 6 l-16 -6 l-16 6z M-8 -22 v36 M8 -16 v36"/></g><g transform="translate(432.5,441.6) rotate(18) scale(1.17)"><circle cx="-16" cy="-14" r="8"/><circle cx="6" cy="-18" r="9"/><circle cx="24" cy="-12" r="7"/><path d="M-34 14 q2 -18 18 -18 q8 0 12 6 M-10 18 q0 -24 16 -24 q16 0 16 24z M18 -2 q16 0 18 16"/></g><circle cx="133.9" cy="419.7" r="2.7"/><circle cx="229.4" cy="309.5" r="4.8"/><circle cx="309.6" cy="295.6" r="4.5"/><circle cx="384.3" cy="147.8" r="4.2"/><circle cx="378.4" cy="365.9" r="3.5"/><circle cx="332.0" cy="362.7" r="3.9"/><circle cx="262.5" cy="160.6" r="4.0"/><circle cx="255.7" cy="33.7" r="4.1"/><circle cx="417.2" cy="369.5" r="4.3"/><circle cx="163.1" cy="308.7" r="4.0"/><circle cx="185.0" cy="352.1" r="2.7"/><circle cx="315.1" cy="12.5" r="4.0"/><circle cx="202.0" cy="96.7" r="4.2"/><circle cx="208.8" cy="258.1" r="4.8"/><circle cx="107.4" cy="4.7" r="3.3"/><circle cx="284.8" cy="85.1" r="2.9"/><circle cx="380.4" cy="277.2" r="3.6"/><circle cx="374.5" cy="137.3" r="4.2"/><circle cx="83.4" cy="181.0" r="4.5"/><circle cx="384.0" cy="369.7" r="3.5"/><circle cx="244.9" cy="132.9" r="2.8"/><circle cx="208.5" cy="351.6" r="4.6"/><circle cx="298.7" cy="399.0" r="3.2"/><circle cx="71.0" cy="189.3" r="3.2"/><circle cx="89.9" cy="173.9" r="4.1"/><circle cx="207.4" cy="132.5" r="4.6"/><circle cx="412.5" cy="190.0" r="2.7"/><circle cx="13.2" cy="366.6" r="2.6"/><circle cx="297.6" cy="239.6" r="3.3"/><circle cx="332.4" cy="8.0" r="2.8"/><circle cx="191.0" cy="10.4" r="4.6"/><circle cx="99.7" cy="59.2" r="2.6"/><circle cx="264.3" cy="187.5" r="4.1"/><circle cx="275.1" cy="339.1" r="4.9"/><circle cx="287.5" cy="83.7" r="3.7"/><circle cx="75.0" cy="4.5" r="3.7"/><circle cx="300.0" cy="75.2" r="3.2"/><circle cx="145.2" cy="292.9" r="3.8"/><circle cx="258.1" cy="317.6" r="3.5"/><circle cx="332.6" cy="380.6" r="2.7"/><circle cx="391.7" cy="303.4" r="2.8"/><circle cx="190.5" cy="262.7" r="4.8"/><circle cx="158.3" cy="238.9" r="4.7"/><circle cx="334.6" cy="396.6" r="3.7"/><circle cx="273.6" cy="86.1" r="4.3"/><circle cx="343.7" cy="269.5" r="4.3"/><circle cx="89.6" cy="378.0" r="5.0"/><circle cx="410.5" cy="225.5" r="4.5"/><circle cx="134.6" cy="382.2" r="4.6"/><circle cx="146.4" cy="34.8" r="3.6"/><circle cx="231.1" cy="322.7" r="3.7"/><circle cx="11.9" cy="339.8" r="2.7"/><circle cx="335.9" cy="72.6" r="3.3"/><circle cx="330.9" cy="59.0" r="2.9"/><circle cx="216.9" cy="303.9" r="4.6"/><circle cx="289.5" cy="397.2" r="3.7"/><circle cx="398.6" cy="36.1" r="3.1"/><circle cx="221.2" cy="121.9" r="4.3"/><circle cx="268.3" cy="219.6" r="4.6"/><circle cx="235.2" cy="130.9" r="3.5"/><circle cx="355.0" cy="378.2" r="3.0"/><circle cx="357.3" cy="406.7" r="3.8"/><circle cx="240.7" cy="84.4" r="3.8"/><circle cx="211.3" cy="254.2" r="2.6"/><circle cx="407.2" cy="216.7" r="3.5"/><circle cx="336.4" cy="236.4" r="3.7"/><circle cx="290.2" cy="27.7" r="3.8"/><circle cx="173.8" cy="401.9" r="4.8"/><circle cx="113.1" cy="198.7" r="2.8"/><circle cx="182.1" cy="342.6" r="4.8"/></g><g transform="translate(420,0)"><g transform="translate(39.2,41.0) rotate(-4) scale(1.27)"><path d="M-24 -16 l16 -6 l16 6 l16 -6 v36 l-16 6 l-16 -6 l-16 6z M-8 -22 v36 M8 -16 v36"/></g><g transform="translate(45.7,115.0) rotate(10) scale(1.18)"><path d="M-18 20 v-20 q0 -20 18 -20 q18 0 18 20 v20 l-6 -5 l-6 5 l-6 -5 l-6 5 l-6 -5z"/><circle cx="-6" cy="-4" r="2"/><circle cx="6" cy="-4" r="2"/></g><g transform="translate(44.7,193.5) rotate(3) scale(1.05)"><path d="M-14 -20 q-6 6 -2 16 q8 20 24 28 q10 4 16 -2 l-8 -8 l-6 4 q-10 -6 -14 -14 l4 -6z"/></g><g transform="translate(46.2,282.2) rotate(37) scale(1.61)"><path d="M0 -12 q2 10 12 12 q-10 2 -12 12 q-2 -10 -12 -12 q10 -2 12 -12z"/></g><g transform="translate(42.5,361.8) rotate(27) scale(1.22)"><path d="M-18 -6 q0 -20 18 -20 q18 0 18 20z M-14 -28 l-6 -8 M14 -28 l6 -8"/><rect x="-18" y="0" width="36" height="30" rx="4"/><rect x="-30" y="0" width="8" height="24" rx="4"/><rect x="22" y="0" width="8" height="24" rx="4"/><circle cx="-7" cy="-14" r="1.5"/><circle cx="7" cy="-14" r="1.5"/></g><g transform="translate(33.0,432.6) rotate(-38) scale(1.08)"><path d="M-24 -16 l16 -6 l16 6 l16 -6 v36 l-16 6 l-16 -6 l-16 6z M-8 -22 v36 M8 -16 v36"/></g><g transform="translate(119.4,39.0) rotate(-21) scale(1.07)"><path d="M-14 10 q4 -4 4 -14 q0 -12 10 -12 q10 0 10 12 q0 10 4 14z M-4 14 q4 6 8 0"/></g><g transform="translate(116.7,112.1) rotate(-18) scale(1.16)"><circle cx="-16" cy="-14" r="8"/><circle cx="6" cy="-18" r="9"/><circle cx="24" cy="-12" r="7"/><path d="M-34 14 q2 -18 18 -18 q8 0 12 6 M-10 18 q0 -24 16 -24 q16 0 16 24z M18 -2 q16 0 18 16"/></g><g transform="translate(128.0,207.9) rotate(-20) scale(1.03)"><path d="M-14 10 q4 -4 4 -14 q0 -12 10 -12 q10 0 10 12 q0 10 4 14z M-4 14 q4 6 8 0"/></g><g transform="translate(124.1,280.2) rotate(21) scale(1.02)"><circle cx="-28" cy="12" r="18"/><circle cx="30" cy="12" r="18"/><path d="M-28 12 l16 -30 h30 l12 30 M-12 -18 l16 30 l22 -30 M-16 -26 h10 M14 -24 l6 -8 h8"/></g><g transform="translate(118.4,365.5) rotate(-39) scale(1.02)"><circle cx="0" cy="0" r="22"/><path d="M-10 -8 q3 -4 6 0 M4 -8 q3 -4 6 0 M-12 6 q12 12 24 0z"/></g><g transform="translate(123.0,435.4) rotate(-2) scale(1.32)"><path d="M-24 -16 l16 -6 l16 6 l16 -6 v36 l-16 6 l-16 -6 l-16 6z M-8 -22 v36 M8 -16 v36"/></g><g transform="translate(207.7,38.4) rotate(-24) scale(1.20)"><circle cx="-16" cy="-14" r="8"/><circle cx="6" cy="-18" r="9"/><circle cx="24" cy="-12" r="7"/><path d="M-34 14 q2 -18 18 -18 q8 0 12 6 M-10 18 q0 -24 16 -24 q16 0 16 24z M18 -2 q16 0 18 16"/></g><g transform="translate(202.8,117.4) rotate(37) scale(1.12)"><path d="M-14 -20 q-6 6 -2 16 q8 20 24 28 q10 4 16 -2 l-8 -8 l-6 4 q-10 -6 -14 -14 l4 -6z"/></g><g transform="translate(204.1,193.9) rotate(-39) scale(1.25)"><rect x="-20" y="-12" width="40" height="28" rx="6"/><circle cx="0" cy="2" r="9"/><circle cx="0" cy="2" r="3"/><path d="M-8 -12 l3 -6 h10 l3 6"/></g><g transform="translate(199.4,279.8) rotate(-4) scale(1.20)"><rect x="-16" y="-22" width="32" height="44" rx="3"/><path d="M-10 -22 v44 M-4 -10 h14 M-4 -4 h14"/></g><g transform="translate(195.1,363.7) rotate(-9) scale(1.15)"><path d="M-18 -6 q0 -20 18 -20 q18 0 18 20z M-14 -28 l-6 -8 M14 -28 l6 -8"/><rect x="-18" y="0" width="36" height="30" rx="4"/><rect x="-30" y="0" width="8" height="24" rx="4"/><rect x="22" y="0" width="8" height="24" rx="4"/><circle cx="-7" cy="-14" r="1.5"/><circle cx="7" cy="-14" r="1.5"/></g><g transform="translate(198.3,447.8) rotate(38) scale(1.09)"><circle cx="-28" cy="12" r="18"/><circle cx="30" cy="12" r="18"/><path d="M-28 12 l16 -30 h30 l12 30 M-12 -18 l16 30 l22 -30 M-16 -26 h10 M14 -24 l6 -8 h8"/></g><g transform="translate(284.9,36.9) rotate(-25) scale(1.01)"><path d="M-24 -16 l16 -6 l16 6 l16 -6 v36 l-16 6 l-16 -6 l-16 6z M-8 -22 v36 M8 -16 v36"/></g><g transform="translate(287.9,121.6) rotate(39) scale(1.24)"><path d="M0 -12 q2 10 12 12 q-10 2 -12 12 q-2 -10 -12 -12 q10 -2 12 -12z"/></g><g transform="translate(275.4,196.1) rotate(26) scale(1.21)"><path d="M-18 20 v-20 q0 -20 18 -20 q18 0 18 20 v20 l-6 -5 l-6 5 l-6 -5 l-6 5 l-6 -5z"/><circle cx="-6" cy="-4" r="2"/><circle cx="6" cy="-4" r="2"/></g><g transform="translate(278.2,273.2) rotate(-21) scale(1.20)"><rect x="-20" y="-12" width="40" height="28" rx="6"/><circle cx="0" cy="2" r="9"/><circle cx="0" cy="2" r="3"/><path d="M-8 -12 l3 -6 h10 l3 6"/></g><g transform="translate(281.6,357.9) rotate(7) scale(1.04)"><path d="M0 14 C-22 -2 -18 -20 -7 -20 C-3 -20 0 -16 0 -12 C0 -16 3 -20 7 -20 C18 -20 22 -2 0 14z"/></g><g transform="translate(285.3,434.2) rotate(-28) scale(1.06)"><circle cx="0" cy="0" r="22"/><path d="M-10 -8 q3 -4 6 0 M4 -8 q3 -4 6 0 M-12 6 q12 12 24 0z"/></g><g transform="translate(366.5,45.1) rotate(-27) scale(1.25)"><rect x="-20" y="-12" width="40" height="28" rx="6"/><circle cx="0" cy="2" r="9"/><circle cx="0" cy="2" r="3"/><path d="M-8 -12 l3 -6 h10 l3 6"/></g><g transform="translate(362.1,120.9) rotate(31) scale(1.33)"><rect x="-16" y="-22" width="32" height="44" rx="3"/><path d="M-10 -22 v44 M-4 -10 h14 M-4 -4 h14"/></g><g transform="translate(361.7,198.7) rotate(1) scale(1.04)"><circle cx="-16" cy="-14" r="8"/><circle cx="6" cy="-18" r="9"/><circle cx="24" cy="-12" r="7"/><path d="M-34 14 q2 -18 18 -18 q8 0 12 6 M-10 18 q0 -24 16 -24 q16 0 16 24z M18 -2 q16 0 18 16"/></g><g transform="translate(356.1,283.8) rotate(26) scale(1.09)"><circle cx="0" cy="0" r="22"/><path d="M-10 -8 q3 -4 6 0 M4 -8 q3 -4 6 0 M-12 6 q12 12 24 0z"/></g><g transform="translate(361.5,356.7) rotate(38) scale(1.33)"><path d="M-18 -6 q0 -20 18 -20 q18 0 18 20z M-14 -28 l-6 -8 M14 -28 l6 -8"/><rect x="-18" y="0" width="36" height="30" rx="4"/><rect x="-30" y="0" width="8" height="24" rx="4"/><rect x="22" y="0" width="8" height="24" rx="4"/><circle cx="-7" cy="-14" r="1.5"/><circle cx="7" cy="-14" r="1.5"/></g><g transform="translate(354.0,439.7) rotate(9) scale(1.30)"><rect x="-16" y="-22" width="32" height="44" rx="3"/><path d="M-10 -22 v44 M-4 -10 h14 M-4 -4 h14"/></g><g transform="translate(436.5,46.7) rotate(-34) scale(1.26)"><rect x="-20" y="-12" width="40" height="28" rx="6"/><circle cx="0" cy="2" r="9"/><circle cx="0" cy="2" r="3"/><path d="M-8 -12 l3 -6 h10 l3 6"/></g><g transform="translate(438.6,116.0) rotate(-10) scale(1.06)"><circle cx="-28" cy="12" r="18"/><circle cx="30" cy="12" r="18"/><path d="M-28 12 l16 -30 h30 l12 30 M-12 -18 l16 30 l22 -30 M-16 -26 h10 M14 -24 l6 -8 h8"/></g><g transform="translate(441.2,194.1) rotate(-4) scale(1.05)"><path d="M-20 -14 h32 q0 30 -16 30 q-16 0 -16 -30z M12 -8 q10 0 10 8 q0 8 -10 8 M-26 18 h44"/><ellipse cx="-4" cy="-14" rx="16" ry="4"/></g><g transform="translate(437.3,283.7) rotate(-29) scale(1.45)"><path d="M0 -12 l3 8 h8 l-6 5 l2 9 l-7 -5 l-7 5 l2 -9 l-6 -5 h8z"/></g><g transform="translate(432.6,352.3) rotate(-15) scale(1.13)"><path d="M-24 -16 l16 -6 l16 6 l16 -6 v36 l-16 6 l-16 -6 l-16 6z M-8 -22 v36 M8 -16 v36"/></g><g transform="translate(432.5,441.6) rotate(18) scale(1.17)"><circle cx="-16" cy="-14" r="8"/><circle cx="6" cy="-18" r="9"/><circle cx="24" cy="-12" r="7"/><path d="M-34 14 q2 -18 18 -18 q8 0 12 6 M-10 18 q0 -24 16 -24 q16 0 16 24z M18 -2 q16 0 18 16"/></g><circle cx="133.9" cy="419.7" r="2.7"/><circle cx="229.4" cy="309.5" r="4.8"/><circle cx="309.6" cy="295.6" r="4.5"/><circle cx="384.3" cy="147.8" r="4.2"/><circle cx="378.4" cy="365.9" r="3.5"/><circle cx="332.0" cy="362.7" r="3.9"/><circle cx="262.5" cy="160.6" r="4.0"/><circle cx="255.7" cy="33.7" r="4.1"/><circle cx="417.2" cy="369.5" r="4.3"/><circle cx="163.1" cy="308.7" r="4.0"/><circle cx="185.0" cy="352.1" r="2.7"/><circle cx="315.1" cy="12.5" r="4.0"/><circle cx="202.0" cy="96.7" r="4.2"/><circle cx="208.8" cy="258.1" r="4.8"/><circle cx="107.4" cy="4.7" r="3.3"/><circle cx="284.8" cy="85.1" r="2.9"/><circle cx="380.4" cy="277.2" r="3.6"/><circle cx="374.5" cy="137.3" r="4.2"/><circle cx="83.4" cy="181.0" r="4.5"/><circle cx="384.0" cy="369.7" r="3.5"/><circle cx="244.9" cy="132.9" r="2.8"/><circle cx="208.5" cy="351.6" r="4.6"/><circle cx="298.7" cy="399.0" r="3.2"/><circle cx="71.0" cy="189.3" r="3.2"/><circle cx="89.9" cy="173.9" r="4.1"/><circle cx="207.4" cy="132.5" r="4.6"/><circle cx="412.5" cy="190.0" r="2.7"/><circle cx="13.2" cy="366.6" r="2.6"/><circle cx="297.6" cy="239.6" r="3.3"/><circle cx="332.4" cy="8.0" r="2.8"/><circle cx="191.0" cy="10.4" r="4.6"/><circle cx="99.7" cy="59.2" r="2.6"/><circle cx="264.3" cy="187.5" r="4.1"/><circle cx="275.1" cy="339.1" r="4.9"/><circle cx="287.5" cy="83.7" r="3.7"/><circle cx="75.0" cy="4.5" r="3.7"/><circle cx="300.0" cy="75.2" r="3.2"/><circle cx="145.2" cy="292.9" r="3.8"/><circle cx="258.1" cy="317.6" r="3.5"/><circle cx="332.6" cy="380.6" r="2.7"/><circle cx="391.7" cy="303.4" r="2.8"/><circle cx="190.5" cy="262.7" r="4.8"/><circle cx="158.3" cy="238.9" r="4.7"/><circle cx="334.6" cy="396.6" r="3.7"/><circle cx="273.6" cy="86.1" r="4.3"/><circle cx="343.7" cy="269.5" r="4.3"/><circle cx="89.6" cy="378.0" r="5.0"/><circle cx="410.5" cy="225.5" r="4.5"/><circle cx="134.6" cy="382.2" r="4.6"/><circle cx="146.4" cy="34.8" r="3.6"/><circle cx="231.1" cy="322.7" r="3.7"/><circle cx="11.9" cy="339.8" r="2.7"/><circle cx="335.9" cy="72.6" r="3.3"/><circle cx="330.9" cy="59.0" r="2.9"/><circle cx="216.9" cy="303.9" r="4.6"/><circle cx="289.5" cy="397.2" r="3.7"/><circle cx="398.6" cy="36.1" r="3.1"/><circle cx="221.2" cy="121.9" r="4.3"/><circle cx="268.3" cy="219.6" r="4.6"/><circle cx="235.2" cy="130.9" r="3.5"/><circle cx="355.0" cy="378.2" r="3.0"/><circle cx="357.3" cy="406.7" r="3.8"/><circle cx="240.7" cy="84.4" r="3.8"/><circle cx="211.3" cy="254.2" r="2.6"/><circle cx="407.2" cy="216.7" r="3.5"/><circle cx="336.4" cy="236.4" r="3.7"/><circle cx="290.2" cy="27.7" r="3.8"/><circle cx="173.8" cy="401.9" r="4.8"/><circle cx="113.1" cy="198.7" r="2.8"/><circle cx="182.1" cy="342.6" r="4.8"/></g><g transform="translate(420,420)"><g transform="translate(39.2,41.0) rotate(-4) scale(1.27)"><path d="M-24 -16 l16 -6 l16 6 l16 -6 v36 l-16 6 l-16 -6 l-16 6z M-8 -22 v36 M8 -16 v36"/></g><g transform="translate(45.7,115.0) rotate(10) scale(1.18)"><path d="M-18 20 v-20 q0 -20 18 -20 q18 0 18 20 v20 l-6 -5 l-6 5 l-6 -5 l-6 5 l-6 -5z"/><circle cx="-6" cy="-4" r="2"/><circle cx="6" cy="-4" r="2"/></g><g transform="translate(44.7,193.5) rotate(3) scale(1.05)"><path d="M-14 -20 q-6 6 -2 16 q8 20 24 28 q10 4 16 -2 l-8 -8 l-6 4 q-10 -6 -14 -14 l4 -6z"/></g><g transform="translate(46.2,282.2) rotate(37) scale(1.61)"><path d="M0 -12 q2 10 12 12 q-10 2 -12 12 q-2 -10 -12 -12 q10 -2 12 -12z"/></g><g transform="translate(42.5,361.8) rotate(27) scale(1.22)"><path d="M-18 -6 q0 -20 18 -20 q18 0 18 20z M-14 -28 l-6 -8 M14 -28 l6 -8"/><rect x="-18" y="0" width="36" height="30" rx="4"/><rect x="-30" y="0" width="8" height="24" rx="4"/><rect x="22" y="0" width="8" height="24" rx="4"/><circle cx="-7" cy="-14" r="1.5"/><circle cx="7" cy="-14" r="1.5"/></g><g transform="translate(33.0,432.6) rotate(-38) scale(1.08)"><path d="M-24 -16 l16 -6 l16 6 l16 -6 v36 l-16 6 l-16 -6 l-16 6z M-8 -22 v36 M8 -16 v36"/></g><g transform="translate(119.4,39.0) rotate(-21) scale(1.07)"><path d="M-14 10 q4 -4 4 -14 q0 -12 10 -12 q10 0 10 12 q0 10 4 14z M-4 14 q4 6 8 0"/></g><g transform="translate(116.7,112.1) rotate(-18) scale(1.16)"><circle cx="-16" cy="-14" r="8"/><circle cx="6" cy="-18" r="9"/><circle cx="24" cy="-12" r="7"/><path d="M-34 14 q2 -18 18 -18 q8 0 12 6 M-10 18 q0 -24 16 -24 q16 0 16 24z M18 -2 q16 0 18 16"/></g><g transform="translate(128.0,207.9) rotate(-20) scale(1.03)"><path d="M-14 10 q4 -4 4 -14 q0 -12 10 -12 q10 0 10 12 q0 10 4 14z M-4 14 q4 6 8 0"/></g><g transform="translate(124.1,280.2) rotate(21) scale(1.02)"><circle cx="-28" cy="12" r="18"/><circle cx="30" cy="12" r="18"/><path d="M-28 12 l16 -30 h30 l12 30 M-12 -18 l16 30 l22 -30 M-16 -26 h10 M14 -24 l6 -8 h8"/></g><g transform="translate(118.4,365.5) rotate(-39) scale(1.02)"><circle cx="0" cy="0" r="22"/><path d="M-10 -8 q3 -4 6 0 M4 -8 q3 -4 6 0 M-12 6 q12 12 24 0z"/></g><g transform="translate(123.0,435.4) rotate(-2) scale(1.32)"><path d="M-24 -16 l16 -6 l16 6 l16 -6 v36 l-16 6 l-16 -6 l-16 6z M-8 -22 v36 M8 -16 v36"/></g><g transform="translate(207.7,38.4) rotate(-24) scale(1.20)"><circle cx="-16" cy="-14" r="8"/><circle cx="6" cy="-18" r="9"/><circle cx="24" cy="-12" r="7"/><path d="M-34 14 q2 -18 18 -18 q8 0 12 6 M-10 18 q0 -24 16 -24 q16 0 16 24z M18 -2 q16 0 18 16"/></g><g transform="translate(202.8,117.4) rotate(37) scale(1.12)"><path d="M-14 -20 q-6 6 -2 16 q8 20 24 28 q10 4 16 -2 l-8 -8 l-6 4 q-10 -6 -14 -14 l4 -6z"/></g><g transform="translate(204.1,193.9) rotate(-39) scale(1.25)"><rect x="-20" y="-12" width="40" height="28" rx="6"/><circle cx="0" cy="2" r="9"/><circle cx="0" cy="2" r="3"/><path d="M-8 -12 l3 -6 h10 l3 6"/></g><g transform="translate(199.4,279.8) rotate(-4) scale(1.20)"><rect x="-16" y="-22" width="32" height="44" rx="3"/><path d="M-10 -22 v44 M-4 -10 h14 M-4 -4 h14"/></g><g transform="translate(195.1,363.7) rotate(-9) scale(1.15)"><path d="M-18 -6 q0 -20 18 -20 q18 0 18 20z M-14 -28 l-6 -8 M14 -28 l6 -8"/><rect x="-18" y="0" width="36" height="30" rx="4"/><rect x="-30" y="0" width="8" height="24" rx="4"/><rect x="22" y="0" width="8" height="24" rx="4"/><circle cx="-7" cy="-14" r="1.5"/><circle cx="7" cy="-14" r="1.5"/></g><g transform="translate(198.3,447.8) rotate(38) scale(1.09)"><circle cx="-28" cy="12" r="18"/><circle cx="30" cy="12" r="18"/><path d="M-28 12 l16 -30 h30 l12 30 M-12 -18 l16 30 l22 -30 M-16 -26 h10 M14 -24 l6 -8 h8"/></g><g transform="translate(284.9,36.9) rotate(-25) scale(1.01)"><path d="M-24 -16 l16 -6 l16 6 l16 -6 v36 l-16 6 l-16 -6 l-16 6z M-8 -22 v36 M8 -16 v36"/></g><g transform="translate(287.9,121.6) rotate(39) scale(1.24)"><path d="M0 -12 q2 10 12 12 q-10 2 -12 12 q-2 -10 -12 -12 q10 -2 12 -12z"/></g><g transform="translate(275.4,196.1) rotate(26) scale(1.21)"><path d="M-18 20 v-20 q0 -20 18 -20 q18 0 18 20 v20 l-6 -5 l-6 5 l-6 -5 l-6 5 l-6 -5z"/><circle cx="-6" cy="-4" r="2"/><circle cx="6" cy="-4" r="2"/></g><g transform="translate(278.2,273.2) rotate(-21) scale(1.20)"><rect x="-20" y="-12" width="40" height="28" rx="6"/><circle cx="0" cy="2" r="9"/><circle cx="0" cy="2" r="3"/><path d="M-8 -12 l3 -6 h10 l3 6"/></g><g transform="translate(281.6,357.9) rotate(7) scale(1.04)"><path d="M0 14 C-22 -2 -18 -20 -7 -20 C-3 -20 0 -16 0 -12 C0 -16 3 -20 7 -20 C18 -20 22 -2 0 14z"/></g><g transform="translate(285.3,434.2) rotate(-28) scale(1.06)"><circle cx="0" cy="0" r="22"/><path d="M-10 -8 q3 -4 6 0 M4 -8 q3 -4 6 0 M-12 6 q12 12 24 0z"/></g><g transform="translate(366.5,45.1) rotate(-27) scale(1.25)"><rect x="-20" y="-12" width="40" height="28" rx="6"/><circle cx="0" cy="2" r="9"/><circle cx="0" cy="2" r="3"/><path d="M-8 -12 l3 -6 h10 l3 6"/></g><g transform="translate(362.1,120.9) rotate(31) scale(1.33)"><rect x="-16" y="-22" width="32" height="44" rx="3"/><path d="M-10 -22 v44 M-4 -10 h14 M-4 -4 h14"/></g><g transform="translate(361.7,198.7) rotate(1) scale(1.04)"><circle cx="-16" cy="-14" r="8"/><circle cx="6" cy="-18" r="9"/><circle cx="24" cy="-12" r="7"/><path d="M-34 14 q2 -18 18 -18 q8 0 12 6 M-10 18 q0 -24 16 -24 q16 0 16 24z M18 -2 q16 0 18 16"/></g><g transform="translate(356.1,283.8) rotate(26) scale(1.09)"><circle cx="0" cy="0" r="22"/><path d="M-10 -8 q3 -4 6 0 M4 -8 q3 -4 6 0 M-12 6 q12 12 24 0z"/></g><g transform="translate(361.5,356.7) rotate(38) scale(1.33)"><path d="M-18 -6 q0 -20 18 -20 q18 0 18 20z M-14 -28 l-6 -8 M14 -28 l6 -8"/><rect x="-18" y="0" width="36" height="30" rx="4"/><rect x="-30" y="0" width="8" height="24" rx="4"/><rect x="22" y="0" width="8" height="24" rx="4"/><circle cx="-7" cy="-14" r="1.5"/><circle cx="7" cy="-14" r="1.5"/></g><g transform="translate(354.0,439.7) rotate(9) scale(1.30)"><rect x="-16" y="-22" width="32" height="44" rx="3"/><path d="M-10 -22 v44 M-4 -10 h14 M-4 -4 h14"/></g><g transform="translate(436.5,46.7) rotate(-34) scale(1.26)"><rect x="-20" y="-12" width="40" height="28" rx="6"/><circle cx="0" cy="2" r="9"/><circle cx="0" cy="2" r="3"/><path d="M-8 -12 l3 -6 h10 l3 6"/></g><g transform="translate(438.6,116.0) rotate(-10) scale(1.06)"><circle cx="-28" cy="12" r="18"/><circle cx="30" cy="12" r="18"/><path d="M-28 12 l16 -30 h30 l12 30 M-12 -18 l16 30 l22 -30 M-16 -26 h10 M14 -24 l6 -8 h8"/></g><g transform="translate(441.2,194.1) rotate(-4) scale(1.05)"><path d="M-20 -14 h32 q0 30 -16 30 q-16 0 -16 -30z M12 -8 q10 0 10 8 q0 8 -10 8 M-26 18 h44"/><ellipse cx="-4" cy="-14" rx="16" ry="4"/></g><g transform="translate(437.3,283.7) rotate(-29) scale(1.45)"><path d="M0 -12 l3 8 h8 l-6 5 l2 9 l-7 -5 l-7 5 l2 -9 l-6 -5 h8z"/></g><g transform="translate(432.6,352.3) rotate(-15) scale(1.13)"><path d="M-24 -16 l16 -6 l16 6 l16 -6 v36 l-16 6 l-16 -6 l-16 6z M-8 -22 v36 M8 -16 v36"/></g><g transform="translate(432.5,441.6) rotate(18) scale(1.17)"><circle cx="-16" cy="-14" r="8"/><circle cx="6" cy="-18" r="9"/><circle cx="24" cy="-12" r="7"/><path d="M-34 14 q2 -18 18 -18 q8 0 12 6 M-10 18 q0 -24 16 -24 q16 0 16 24z M18 -2 q16 0 18 16"/></g><circle cx="133.9" cy="419.7" r="2.7"/><circle cx="229.4" cy="309.5" r="4.8"/><circle cx="309.6" cy="295.6" r="4.5"/><circle cx="384.3" cy="147.8" r="4.2"/><circle cx="378.4" cy="365.9" r="3.5"/><circle cx="332.0" cy="362.7" r="3.9"/><circle cx="262.5" cy="160.6" r="4.0"/><circle cx="255.7" cy="33.7" r="4.1"/><circle cx="417.2" cy="369.5" r="4.3"/><circle cx="163.1" cy="308.7" r="4.0"/><circle cx="185.0" cy="352.1" r="2.7"/><circle cx="315.1" cy="12.5" r="4.0"/><circle cx="202.0" cy="96.7" r="4.2"/><circle cx="208.8" cy="258.1" r="4.8"/><circle cx="107.4" cy="4.7" r="3.3"/><circle cx="284.8" cy="85.1" r="2.9"/><circle cx="380.4" cy="277.2" r="3.6"/><circle cx="374.5" cy="137.3" r="4.2"/><circle cx="83.4" cy="181.0" r="4.5"/><circle cx="384.0" cy="369.7" r="3.5"/><circle cx="244.9" cy="132.9" r="2.8"/><circle cx="208.5" cy="351.6" r="4.6"/><circle cx="298.7" cy="399.0" r="3.2"/><circle cx="71.0" cy="189.3" r="3.2"/><circle cx="89.9" cy="173.9" r="4.1"/><circle cx="207.4" cy="132.5" r="4.6"/><circle cx="412.5" cy="190.0" r="2.7"/><circle cx="13.2" cy="366.6" r="2.6"/><circle cx="297.6" cy="239.6" r="3.3"/><circle cx="332.4" cy="8.0" r="2.8"/><circle cx="191.0" cy="10.4" r="4.6"/><circle cx="99.7" cy="59.2" r="2.6"/><circle cx="264.3" cy="187.5" r="4.1"/><circle cx="275.1" cy="339.1" r="4.9"/><circle cx="287.5" cy="83.7" r="3.7"/><circle cx="75.0" cy="4.5" r="3.7"/><circle cx="300.0" cy="75.2" r="3.2"/><circle cx="145.2" cy="292.9" r="3.8"/><circle cx="258.1" cy="317.6" r="3.5"/><circle cx="332.6" cy="380.6" r="2.7"/><circle cx="391.7" cy="303.4" r="2.8"/><circle cx="190.5" cy="262.7" r="4.8"/><circle cx="158.3" cy="238.9" r="4.7"/><circle cx="334.6" cy="396.6" r="3.7"/><circle cx="273.6" cy="86.1" r="4.3"/><circle cx="343.7" cy="269.5" r="4.3"/><circle cx="89.6" cy="378.0" r="5.0"/><circle cx="410.5" cy="225.5" r="4.5"/><circle cx="134.6" cy="382.2" r="4.6"/><circle cx="146.4" cy="34.8" r="3.6"/><circle cx="231.1" cy="322.7" r="3.7"/><circle cx="11.9" cy="339.8" r="2.7"/><circle cx="335.9" cy="72.6" r="3.3"/><circle cx="330.9" cy="59.0" r="2.9"/><circle cx="216.9" cy="303.9" r="4.6"/><circle cx="289.5" cy="397.2" r="3.7"/><circle cx="398.6" cy="36.1" r="3.1"/><circle cx="221.2" cy="121.9" r="4.3"/><circle cx="268.3" cy="219.6" r="4.6"/><circle cx="235.2" cy="130.9" r="3.5"/><circle cx="355.0" cy="378.2" r="3.0"/><circle cx="357.3" cy="406.7" r="3.8"/><circle cx="240.7" cy="84.4" r="3.8"/><circle cx="211.3" cy="254.2" r="2.6"/><circle cx="407.2" cy="216.7" r="3.5"/><circle cx="336.4" cy="236.4" r="3.7"/><circle cx="290.2" cy="27.7" r="3.8"/><circle cx="173.8" cy="401.9" r="4.8"/><circle cx="113.1" cy="198.7" r="2.8"/><circle cx="182.1" cy="342.6" r="4.8"/></g></g></pattern></defs><rect width="776" height="852" fill="url(#dd)"/></svg></div>
 <!-- date pill (coords relative to body: x-8, y-84) -->
 <div class="a" style="left:276px;top:36px;width:224px;height:36.5px;border:1.2px solid #b9c1c5;border-radius:18px;background:#1f2a31"></div>
 <div class="a" style="left:276px;top:46px;width:224px;text-align:center;font-size:15.5px;color:#a9b2b8;line-height:18px">07/08/22</div>
 <!-- bubble -->
 <div class="a" style="left:15px;top:98px;width:423px;height:385px;border-radius:7px;background:#212c33;border-bottom:1.5px solid #c9d1d6;overflow:hidden">
  <div class="a" style="left:0;top:118px;width:423px;height:260px;background:#1e1e1f"></div>
 </div>
 <div class="a" style="left:15px;top:216px;width:423px;height:0;border-top:2.5px dotted #f0f0f0"></div>
 <div class="a" style="left:23px;top:105px;width:408px;height:54px;background:#2a3540;border:1px solid #34404a;border-radius:3px"></div>
 <svg class="a" style="left:31px;top:115.5px" width="12" height="12" viewBox="0 0 12 12"><circle cx="6" cy="6" r="5" fill="none" stroke="#8b959c" stroke-width="1.5"/><path d="M6 3 v3.3 l2 1.3" fill="none" stroke="#8b959c" stroke-width="1.4"/></svg>
 <div class="a" style="left:48px;top:113px;font-size:12.9px;color:#8b959c;line-height:19px;white-space:nowrap">Houve um erro no whatsapp ao receber esta mensagem, abra</div>
 <div class="a" style="left:31px;top:132px;font-size:12.9px;color:#8b959c;line-height:19px;white-space:nowrap">esta conversa no aparelho e recarregue as mensagens.</div>
 <div class="a" style="left:23px;top:164px;font-size:10px;color:#d3dadd;line-height:12px">16:31</div>
 <svg class="a" style="left:23px;top:201px" width="9" height="6" viewBox="0 0 9 6"><path d="M0.5 0.5 h8 l-4 5z" fill="#eee"/></svg>
 <!-- kebab -->
 <div class="a" style="left:409px;top:225px;width:22px;height:28px;border:1px solid #9a9a9a;border-radius:3px"></div>
 <svg class="a" style="left:409px;top:225px" width="22" height="28"><g fill="#bbb"><circle cx="11" cy="9" r="1.8"/><circle cx="11" cy="14" r="1.8"/><circle cx="11" cy="19" r="1.8"/></g></svg>
 <div class="a" style="left:23px;top:226px;font-size:13.2px;color:#1e8048;line-height:16px;white-space:nowrap">Mensagem processada pelo chatbot.</div>
 <div class="a" style="left:23px;top:245px;font-size:12.5px;font-weight:bold;color:#d9b58a;line-height:16px">INTENÇÃO:</div>
 <div class="a" style="left:24px;top:265px;font-size:13.2px;color:#e2e2e2;line-height:16px;white-space:nowrap"><svg width="11" height="9" viewBox="0 0 11 9" style="display:inline-block;vertical-align:0px;margin-right:4px"><path d="M1.2 0.8 v2.8 q0 2.4 2.4 2.4 h5.4 M6.6 3.6 l2.4 2.4 l-2.4 2.4" fill="none" stroke="#e2e2e2" stroke-width="1.3" stroke-linecap="round" stroke-linejoin="round"/></svg>Nenhuma intenção</div>
 <div class="a" style="left:23px;top:288px;font-size:12.5px;font-weight:bold;color:#d9b58a;line-height:16px">ENTIDADES:</div>
 <div class="a" style="left:24px;top:307px;font-size:13.2px;color:#e2e2e2;line-height:16px;white-space:nowrap"><svg width="11" height="9" viewBox="0 0 11 9" style="display:inline-block;vertical-align:0px;margin-right:4px"><path d="M1.2 0.8 v2.8 q0 2.4 2.4 2.4 h5.4 M6.6 3.6 l2.4 2.4 l-2.4 2.4" fill="none" stroke="#e2e2e2" stroke-width="1.3" stroke-linecap="round" stroke-linejoin="round"/></svg>Nenhuma Entidade</div>
 <div class="a" style="left:23px;top:334px;font-size:12.8px;font-weight:bold;color:#d9b58a;line-height:16px;white-space:nowrap">DIÁLOGO ACIONADO:</div>
 <div class="a" style="left:23px;top:353.5px;font-size:12.5px;font-weight:bold;color:#5f7ef0;line-height:19.5px;white-space:nowrap"><svg width="11" height="9" viewBox="0 0 11 9" style="display:inline-block;vertical-align:0px;margin-right:4px"><path d="M1.2 0.8 v2.8 q0 2.4 2.4 2.4 h5.4 M6.6 3.6 l2.4 2.4 l-2.4 2.4" fill="none" stroke="#5f7ef0" stroke-width="1.3" stroke-linecap="round" stroke-linejoin="round"/></svg>Obter Chat ID dos novos chats adicionados pelos clientes<br><svg width="11" height="9" viewBox="0 0 11 9" style="display:inline-block;vertical-align:0px;margin-right:4px"><path d="M1.2 0.8 v2.8 q0 2.4 2.4 2.4 h5.4 M6.6 3.6 l2.4 2.4 l-2.4 2.4" fill="none" stroke="#5f7ef0" stroke-width="1.3" stroke-linecap="round" stroke-linejoin="round"/></svg>[BLOQUEADOR] - Apague esse diálogo para funcionar o<br>chatbot.</div>
 <svg class="a" style="left:23px;top:427px" width="14" height="14" viewBox="0 0 14 14"><path d="M1.5 2 l11 5 l-11 5 l2.5 -5z M4 7 h7" fill="none" stroke="#d4b48a" stroke-width="1.3" stroke-linejoin="round"/></svg>
 <div class="a" style="left:39px;top:426px;font-size:13.8px;color:#d4b48a;line-height:16px;white-space:nowrap">2022-08-07 16:31:02</div>
 <svg class="a" style="left:23px;top:447px" width="14" height="14" viewBox="0 0 14 14"><path d="M2 2 h8 l2.5 2.5 v7.5 h-10.5z M4.5 2 v3 h5 v-3 M4.5 12 v-3.5 h5 v3.5" fill="none" stroke="#d4b48a" stroke-width="1.3"/></svg>
 <div class="a" style="left:39px;top:446px;font-size:13.8px;color:#d4b48a;line-height:16px;white-space:nowrap">2022-08-07 16:31:11</div>
 <!-- notes -->
 <div class="a" style="left:338px;top:502px;width:422px;height:95px;background:rgba(4,9,12,0.5);border-bottom:2px solid #36331a;border-radius:4px;box-shadow:0 0 6px rgba(0,0,0,0.25)"></div>
<div class="a" style="left:346px;top:510.5px;font-size:14.6px;font-style:italic;color:#6285f2;line-height:17px;white-space:nowrap">Chatbot <span style="font-size:13px;color:#c7ccd0">anotou:</span></div>
<div class="a" style="left:620px;top:509.5px;width:133.5px;text-align:right;font-size:13px;font-style:italic;color:#d5d9dc;line-height:17px">16:31</div>
<svg class="a" style="left:742.5px;top:532.5px" width="12" height="14" viewBox="0 0 12 14"><path d="M0.5 2.2 h11 v1.6 h-11z M4 0.6 h4 v2 h-4z" fill="#e6e6e6"/><path d="M1.4 4.6 h9.2 l-0.7 8.4 q-0.1 0.9 -1 0.9 h-5.8 q-0.9 0 -1 -0.9z" fill="#e6e6e6"/></svg>
<div class="a" style="left:353px;top:537px;font-size:14.7px;font-style:italic;color:#cbd0d4;line-height:22px;white-space:nowrap">@site: Novo chat adicionado pelo cliente ou pelo link do<br>whatsapp</div>
<div class="a" style="left:338px;top:612px;width:422px;height:73px;background:rgba(4,9,12,0.5);border-bottom:2px solid #36331a;border-radius:4px;box-shadow:0 0 6px rgba(0,0,0,0.25)"></div>
<div class="a" style="left:346px;top:620.5px;font-size:14.6px;font-style:italic;color:#6285f2;line-height:17px;white-space:nowrap">Chatbot <span style="font-size:13px;color:#c7ccd0">anotou:</span></div>
<div class="a" style="left:620px;top:619.5px;width:133.5px;text-align:right;font-size:13px;font-style:italic;color:#d5d9dc;line-height:17px">16:31</div>
<svg class="a" style="left:742.5px;top:642.5px" width="12" height="14" viewBox="0 0 12 14"><path d="M0.5 2.2 h11 v1.6 h-11z M4 0.6 h4 v2 h-4z" fill="#e6e6e6"/><path d="M1.4 4.6 h9.2 l-0.7 8.4 q-0.1 0.9 -1 0.9 h-5.8 q-0.9 0 -1 -0.9z" fill="#e6e6e6"/></svg>
<div class="a" style="left:353px;top:647px;font-size:14.7px;font-style:italic;color:#cbd0d4;line-height:22px;white-space:nowrap">@site: Whatsapp fix: Obter dígitos corretos</div>
<div class="a" style="left:338px;top:701px;width:422px;height:93px;background:rgba(4,9,12,0.5);border-bottom:2px solid #36331a;border-radius:4px;box-shadow:0 0 6px rgba(0,0,0,0.25)"></div>
<div class="a" style="left:346px;top:709.5px;font-size:14.6px;font-style:italic;color:#6285f2;line-height:17px;white-space:nowrap">Chatbot <span style="font-size:13px;color:#c7ccd0">anotou:</span></div>
<div class="a" style="left:620px;top:708.5px;width:133.5px;text-align:right;font-size:13px;font-style:italic;color:#d5d9dc;line-height:17px">16:31</div>
<svg class="a" style="left:742.5px;top:731.5px" width="12" height="14" viewBox="0 0 12 14"><path d="M0.5 2.2 h11 v1.6 h-11z M4 0.6 h4 v2 h-4z" fill="#e6e6e6"/><path d="M1.4 4.6 h9.2 l-0.7 8.4 q-0.1 0.9 -1 0.9 h-5.8 q-0.9 0 -1 -0.9z" fill="#e6e6e6"/></svg>
<div class="a" style="left:353px;top:736px;font-size:14.7px;font-style:italic;color:#cbd0d4;line-height:22px;white-space:nowrap">@site: Whatsapp fix: O número original foi mantido e a<br>atualização dos campos personalizados será executada</div>
<div class="a" style="left:338px;top:811px;width:422px;height:93px;background:rgba(4,9,12,0.5);border-bottom:2px solid #36331a;border-radius:4px;box-shadow:0 0 6px rgba(0,0,0,0.25)"></div>
<div class="a" style="left:346px;top:819.5px;font-size:14.6px;font-style:italic;color:#6285f2;line-height:17px;white-space:nowrap">Chatbot <span style="font-size:13px;color:#c7ccd0">anotou:</span></div>
<div class="a" style="left:620px;top:818.5px;width:133.5px;text-align:right;font-size:13px;font-style:italic;color:#d5d9dc;line-height:17px">16:31</div>
<svg class="a" style="left:742.5px;top:841.5px" width="12" height="14" viewBox="0 0 12 14"><path d="M0.5 2.2 h11 v1.6 h-11z M4 0.6 h4 v2 h-4z" fill="#e6e6e6"/><path d="M1.4 4.6 h9.2 l-0.7 8.4 q-0.1 0.9 -1 0.9 h-5.8 q-0.9 0 -1 -0.9z" fill="#e6e6e6"/></svg>
<div class="a" style="left:353px;top:846px;font-size:14.7px;font-style:italic;color:#cbd0d4;line-height:22px;white-space:nowrap">@site: Whatsapp fix: O número original foi mantido e a</div>

</div>
<div id="sbar" class="a"></div>
<div id="strack" class="a"></div>
<div id="cfoot" class="a">
 <div class="a" style="left:74px;top:15px;width:584px;height:30px;background:#141414;border:1.2px solid #4a4a4a;border-radius:15px"></div>
 <div class="a" style="left:733px;top:16px;width:34px;height:30px;background:#242424;border:1px solid #3c3c3c;border-radius:3px"></div>
</div>
<div id="rpanel" class="a">
 <!-- tabs (coords relative to panel: x-790, y-40) -->
 <svg class="a" style="left:0;top:0" width="557" height="44" viewBox="790 40 557 44">
  <rect x="869" y="40" width="478" height="44" fill="#1f2023"/>
  <path d="M869 84.5 H1347" stroke="#3a3b3d" stroke-width="1"/><path d="M790.5 40 V84" stroke="#3a3a3a" stroke-width="1"/>
  <g stroke="#35363a" stroke-width="1.2"><path d="M869.5 40 V84 M948.8 40 V84 M1028.3 40 V84 M1107.8 40 V84 M1187 40 V84 M1266.5 40 V84 M1345.5 40 V84"/></g>
  <!-- active icon -->
  <rect x="822" y="52.5" width="17" height="17" rx="2" fill="none" stroke="#7d8ef5" stroke-width="2"/>
  <circle cx="830.5" cy="58.5" r="2.8" fill="none" stroke="#7d8ef5" stroke-width="1.8"/>
  <path d="M825.3 68.5 q0.8 -5 5.2 -5 q4.4 0 5.2 5" fill="none" stroke="#7d8ef5" stroke-width="1.8"/>
  <g fill="none" stroke="#c0c0c0" stroke-width="1.8" stroke-linecap="round" stroke-linejoin="round">
   <!-- history -->
   <path d="M901.5 57 a8.5 8.5 0 1 1 -0.5 6"/><path d="M900.5 53 v4.5 h4.5"/><path d="M909.5 57 v4 h3"/>
   <!-- notepad -->
   <rect x="981" y="53" width="15.5" height="17" rx="1.5"/><path d="M985 51 v3 M988.8 51 v3 M992.5 51 v3 M984.5 59 h8.5 M984.5 63.5 h8.5"/>
   <!-- user check -->
   <circle cx="1065" cy="57" r="4"/><path d="M1058.5 70 q0.5 -7.5 6.5 -7.5 q4 0 5.5 3"/><path d="M1070 60 l2 2 l3.5 -3.5"/>
   <!-- robot -->
   <rect x="1140" y="57" width="14" height="12" rx="2.5"/><path d="M1147 53 v4 M1138 62 v3 M1156 62 v3 M1144.5 57 v2.5 h5 v-2.5"/>
   <!-- play -->
   <path d="M1219.5 53 v16 q0 2 2 1 l11.5 -7 q1.5 -1 0 -2 l-11.5 -7 q-2 -1 -2 1z"/>
  </g>
  <circle cx="1147" cy="52.5" r="1.5" fill="#c0c0c0"/>
  <circle cx="1144.2" cy="64.5" r="1" fill="#c0c0c0"/><circle cx="1149.8" cy="64.5" r="1" fill="#c0c0c0"/>
  <path d="M1300.5 56 l11 11 M1311.5 56 l-11 11" stroke="#e8433f" stroke-width="2.2" stroke-linecap="round"/>
 </svg>
 <!-- right-edge strip -->
 <div class="a" style="left:555px;top:44px;width:2px;height:874px;background:#1f1f1f"></div>
 <!--PC-->
<svg class="a" style="left:23px;top:67px;border-radius:3px" width="149" height="149" viewBox="0 0 149 149">
 <defs>
  <radialGradient id="rg1" cx="0.5" cy="0.5" r="0.5"><stop offset="0" stop-color="#f6e53a"/><stop offset="1" stop-color="#f6e53a" stop-opacity="0"/></radialGradient>
  <radialGradient id="rg2" cx="0.5" cy="0.5" r="0.5"><stop offset="0" stop-color="#c44ae0"/><stop offset="1" stop-color="#c44ae0" stop-opacity="0"/></radialGradient>
  <radialGradient id="rg3" cx="0.5" cy="0.5" r="0.5"><stop offset="0" stop-color="#f02828"/><stop offset="1" stop-color="#f02828" stop-opacity="0"/></radialGradient>
  <radialGradient id="rg4" cx="0.5" cy="0.5" r="0.5"><stop offset="0" stop-color="#b8e040"/><stop offset="1" stop-color="#b8e040" stop-opacity="0"/></radialGradient>
 </defs>
 <g id="photoG">
 <rect width="149" height="149" fill="#545454"/>
 <g stroke="#8a8a8a" stroke-width="0.9" fill="none" opacity="0.85">
  <path d="M4 8 q5 -3 10 0 t10 0 M6 20 h14 M3 34 q4 -3 8 0 t8 0 M5 50 h12 M4 66 q4 3 8 0 t8 0 M8 82 h10 M4 100 q4 -3 8 0 t8 0 M6 118 h18 M4 132 q5 3 10 0 t10 0 M10 142 h16 M30 6 h20 M40 14 q4 -3 8 0 t8 0 M20 126 h14 M22 140 q4 -4 8 0 M12 108 l4 -6 l4 6 M30 112 h10 M2 90 h8 M26 94 q3 -3 6 0"/>
 </g>
 <rect x="70" y="0" width="79" height="149" fill="#d8b23e"/>
 <circle cx="118" cy="18" r="34" fill="url(#rg1)"/>
 <circle cx="86" cy="12" r="18" fill="#22b3a0"/>
 <circle cx="140" cy="52" r="24" fill="url(#rg2)"/>
 <circle cx="136" cy="88" r="24" fill="url(#rg3)"/>
 <circle cx="140" cy="112" r="18" fill="url(#rg4)"/>
 <circle cx="130" cy="138" r="20" fill="url(#rg2)"/>
 <circle cx="140" cy="145" r="10" fill="#e8803a"/>
 <g stroke="none">
  <path d="M76 14 q6 -6 14 -2 l8 10 l-6 16 l-16 -2z" fill="#2ec46a"/>
  <path d="M78 26 q8 -6 16 0 l-2 12 l-14 0z" fill="#e83030"/>
  <path d="M92 18 q10 -2 18 6 l4 16 l-16 4z" fill="#f5d22a"/>
  <path d="M96 40 q10 -2 16 8 l-2 14 l-14 -4z" fill="#38b8e8"/>
  <path d="M108 46 q10 2 14 12 l-2 16 l-14 -6z" fill="#e84ac8"/>
  <path d="M96 66 q10 0 14 10 l-4 12 l-12 -6z" fill="#f07a2a"/>
  <path d="M110 74 q10 4 10 14 l-6 14 l-10 -8z" fill="#e84a9a"/>
  <path d="M96 84 q8 2 8 12 l-6 8 l-6 -8z" fill="#30c850"/>
 </g>
 <g fill="none" stroke="#ffffff" stroke-width="2.8" stroke-linecap="round" stroke-linejoin="round">
  <path d="M68 12 q-6 -6 -16 -3 q-10 -2 -14 8 q-10 2 -12 12 q-8 6 -6 16 q-8 8 -4 20 q-6 10 2 20 q0 12 14 14 q4 10 14 8 q4 6 10 12"/>
  <path d="M44 22 q6 -2 10 6 M34 40 q10 -6 16 4 M28 62 q10 -2 12 8 M30 82 q10 -4 14 6 M44 96 q-2 -8 8 -10 M58 30 q-6 4 -4 12 M60 54 q-10 4 -6 14"/>
  <path d="M78 10 q10 -4 18 4 q10 -2 14 8 q10 2 10 14 q8 6 4 16 q8 8 2 18 q4 12 -6 18 q0 10 -10 12 q-2 8 -10 8"/>
  <path d="M82 30 q-4 6 2 12 M94 52 q-8 0 -8 8 M104 72 q-8 2 -8 10 M112 36 q-6 4 -4 10"/>
 </g>
 <path d="M54 116 q-4 -24 2 -48 q4 -22 22 -22 q15 0 17 18 q1 8 -1 14 q-2 -14 -15 -16 q-11 0 -14 12 q-2 20 2 34 q2 6 2 8z" fill="#221d1c"/>
 <path d="M64 72 q0 -16 12 -16 q12 0 12 18 q0 14 -4 20 q-4 6 -9 5 q-7 -2 -9 -10 q-2 -8 -2 -17z" fill="#dcae96"/>
 <path d="M68 72 h7 M79 72 h6" stroke="#5a3a30" stroke-width="1.2"/>
 <path d="M40 149 q-2 -30 10 -42 q8 -8 18 -8 q2 -6 10 -6 q8 2 12 6 q14 2 26 14 q10 12 10 36z" fill="#f0eeea"/>
 <path d="M72 96 q4 -4 10 -2 q4 4 2 10 q-6 2 -12 -2z" fill="#d8a88e"/>
 <path d="M70 104 q8 8 16 2 l8 14 M94 94 q4 10 -2 22" fill="none" stroke="#2a2a3a" stroke-width="1.3"/>
 <g fill="#3a3a44">
  <circle cx="50" cy="118" r="0.9"/><circle cx="58" cy="128" r="0.9"/><circle cx="48" cy="138" r="0.9"/><circle cx="64" cy="142" r="0.9"/>
  <circle cx="72" cy="120" r="0.9"/><circle cx="80" cy="132" r="0.9"/><circle cx="92" cy="124" r="0.9"/><circle cx="104" cy="118" r="0.9"/>
  <circle cx="110" cy="132" r="0.9"/><circle cx="98" cy="140" r="0.9"/><circle cx="118" cy="144" r="0.9"/><circle cx="84" cy="146" r="0.9"/>
  <circle cx="60" cy="112" r="0.9"/><circle cx="120" cy="124" r="0.9"/><circle cx="70" cy="134" r="0.9"/>
 </g>
 </g>
</svg>
<div class="a" style="left:187.50px;top:67.94px;font-size:10px;line-height:12.0px;color:#b5b5b5;white-space:nowrap;font-weight:bold;letter-spacing:0.3px;">NOME:</div>
<svg class="a" style="left:187px;top:87.5px" width="14" height="14" viewBox="0 0 24 24"><path d="M12 1.5 l3.2 7 l7.6 .8 l-5.7 5.1 l1.6 7.5 l-6.7 -3.9 l-6.7 3.9 l1.6 -7.5 l-5.7 -5.1 l7.6 -.8z" fill="#f2f2f2"/></svg>
<div class="a" style="left:206.00px;top:84.46px;font-size:18px;line-height:21.6px;color:#6d8ff5;white-space:nowrap;">Rose Marculino</div>
<div class="a" style="left:187.50px;top:110.11px;font-size:15.2px;line-height:18.24px;color:#f4f4f4;white-space:nowrap;font-weight:bold;">+55 (27) 999673634</div>
<div class="a" style="left:187.00px;top:138.00px;width:346.50px;height:1.00px;background:#323232"></div>
<div class="a" style="left:187.00px;top:175.20px;width:346.50px;height:1.00px;background:#323232"></div>
<svg class="a" style="left:187.5px;top:149px" width="13" height="13" viewBox="0 0 13 13"><g fill="none" stroke="#d6b98c" stroke-width="1.3"><rect x="1.5" y="4.5" width="10" height="7.5" rx="1.5"/><path d="M6.5 1.5 v3 M4.5 4.5 v1.5 h4 v-1.5"/></g><circle cx="4.7" cy="9.2" r=".8" fill="#d6b98c"/><circle cx="8.3" cy="9.2" r=".8" fill="#d6b98c"/></svg>
<div class="a" style="left:204.00px;top:147.75px;font-size:14px;line-height:16.8px;color:#d6b98c;white-space:nowrap;-webkit-text-stroke:0.4px #d6b98c;">Chatbot:</div>
<svg class="a" style="left:187.5px;top:186.5px" width="13" height="13" viewBox="0 0 13 13"><g fill="none" stroke="#d6b98c" stroke-width="1.3"><rect x="1" y="1.5" width="11" height="3.5" rx="1"/><path d="M2 5 v6 q0 1 1 1 h7 q1 0 1 -1 v-6 M5 7.5 h3"/></g></svg>
<div class="a" style="left:204.00px;top:184.47px;font-size:14.3px;line-height:17.16px;color:#d6b98c;white-space:nowrap;-webkit-text-stroke:0.4px #d6b98c;">Arquivar:</div>
<div class="a" style="left:490.50px;top:146.50px;width:42.00px;height:20.50px;background:#0f2e1f;border:1px solid #2a7a4e;border-radius:2px"></div>
<div class="a" style="left:491.50px;top:147.50px;width:35.00px;height:18.50px;background:#33c47f;border-radius:1px"></div>
<div class="a" style="left:497.50px;top:148.17px;font-size:12.5px;line-height:15.0px;color:#ffffff;white-space:nowrap;">Sim</div>
<div class="a" style="left:490.50px;top:184.00px;width:42.00px;height:21.00px;background:#0f2e1f;border:1px solid #2a7a4e;border-radius:2px"></div>
<div class="a" style="left:491.50px;top:185.00px;width:35.00px;height:19.00px;background:#33c47f;border-radius:1px"></div>
<div class="a" style="left:497.50px;top:185.67px;font-size:12.5px;line-height:15.0px;color:#ffffff;white-space:nowrap;">Sim</div>
<div class="a" style="left:514.50px;top:55.50px;width:30.50px;height:30.50px;background:#1c1c1f;border-radius:50%"></div>
<svg class="a" style="left:524px;top:64.5px" width="12" height="12" viewBox="0 0 12 12"><g fill="none" stroke="#6d8ff5" stroke-width="1.6" stroke-linecap="round"><path d="M5 7 l2 -2"/><path d="M6.5 2.5 l1 -1 q1.3 -1 2.5 0 l0.5 .5 q1 1.2 0 2.5 l-1.5 1.5"/><path d="M5.5 9.5 l-1 1 q-1.3 1 -2.5 0 l-.5 -.5 q-1 -1.2 0 -2.5 l1.5 -1.5"/></g></svg>
<div class="a" style="left:0.00px;top:245.00px;width:555.00px;height:5.00px;background:#272727"></div>
<div class="a" style="left:0.00px;top:337.00px;width:555.00px;height:5.00px;background:#272727"></div>
<div class="a" style="left:0.00px;top:437.00px;width:555.00px;height:5.00px;background:#272727"></div>
<div class="a" style="left:0.00px;top:816.00px;width:555.00px;height:5.00px;background:#272727"></div>
<div class="a" style="left:21.00px;top:266.83px;font-size:13.6px;line-height:16.32px;color:#6d8ff5;white-space:nowrap;font-weight:bold;">Responsável:</div>
<div class="a" style="left:21.00px;top:294.00px;width:342.50px;height:28.00px;background:#2b2c2f;border:1px solid #8a8a8a;border-radius:3px 0 0 3px"></div>
<div class="a" style="left:364.00px;top:294.00px;width:171.00px;height:28.00px;background:#141414;border:1px solid #8a8a8a;border-radius:0 3px 3px 0"></div>
<div class="a" style="left:21.00px;top:300.43px;font-size:12.75px;line-height:15.3px;color:#f2f2f2;white-space:nowrap;font-weight:bold;width:342px;text-align:center;">- Ninguém Delegado -</div>
<div class="a" style="left:364.00px;top:300.57px;font-size:12.6px;line-height:15.12px;color:#9a9a9a;white-space:nowrap;width:171px;text-align:center;">Delegar p/ Fila</div>
<svg class="a" style="left:246px;top:324px" width="64" height="36" viewBox="1036 364 64 36">
 <path d="M1066 372 q10 -5 17 -2 q-2 2 -1 3 q8 -2 14 1 q-5 2 -6 3 q6 1 8 4 q-6 0 -8 1 q5 2 5 5 q-6 -2 -9 -1 q2 3 1 5 q-5 -3 -9 -3 q-8 2 -12 -1z" fill="#e9c87a"/>
 <path d="M1066 372 q8 -4 15 -3 q-2 3 -1 5 q4 0 6 2 q-3 1 -3 3 q3 1 4 3 q-4 0 -5 1 q2 2 2 4 q-4 -2 -7 -1 q-6 1 -11 -1z" fill="#f07474"/>
 <path d="M1038.5 370.5 h28 l-2 15 h-24z" fill="#f3c6b6"/>
 <g fill="#131313"><rect x="1041" y="373" width="3" height="2.6"/><rect x="1045.2" y="373" width="3" height="2.6"/><rect x="1049.4" y="373" width="3" height="2.6"/><rect x="1053.6" y="373" width="3" height="2.6"/><rect x="1057.8" y="373" width="3" height="2.6"/><rect x="1062" y="373" width="3" height="2.6"/>
 <rect x="1041.5" y="377.3" width="3" height="2.6"/><rect x="1045.7" y="377.3" width="3" height="2.6"/><rect x="1049.9" y="377.3" width="3" height="2.6"/><rect x="1054.1" y="377.3" width="3" height="2.6"/><rect x="1058.3" y="377.3" width="3" height="2.6"/><rect x="1062.3" y="377.3" width="2.5" height="2.6"/>
 <rect x="1042" y="381.3" width="3" height="2.4"/><rect x="1046.2" y="381.3" width="3" height="2.4"/><rect x="1050.4" y="381.3" width="3" height="2.4"/><rect x="1054.6" y="381.3" width="3" height="2.4"/><rect x="1058.8" y="381.3" width="3" height="2.4"/></g>
 <g fill="none" stroke="#f3c6b6" stroke-width="2" stroke-linecap="round" stroke-linejoin="round">
  <path d="M1074.5 366 l-6.5 2 l-3 17.5 l1.5 3 q0 1.5 -1.5 1.5 h-23"/>
 </g>
 <circle cx="1044.5" cy="394" r="2.8" fill="none" stroke="#f3c6b6" stroke-width="1.8"/><circle cx="1063" cy="394" r="2.8" fill="none" stroke="#f3c6b6" stroke-width="1.8"/>
</svg>
<div class="a" style="left:21.00px;top:359.13px;font-size:13.6px;line-height:16.32px;color:#6d8ff5;white-space:nowrap;font-weight:bold;">Tags:</div>
<div class="a" style="left:21.00px;top:386.00px;width:88.00px;height:29.00px;border:1px solid #4f7ce8;border-radius:3px"></div>
<svg class="a" style="left:29px;top:392.5px" width="14" height="14" viewBox="0 0 14 14"><circle cx="7" cy="7" r="6.5" fill="#4f8ef0"/><path d="M7 3.5 v7 M3.5 7 h7" stroke="#141414" stroke-width="2"/></svg>
<div class="a" style="left:45.50px;top:392.20px;font-size:13px;line-height:15.6px;color:#5b92f2;white-space:nowrap;">Nova Tag</div>
<div class="a" style="left:21.00px;top:458.93px;font-size:13.6px;line-height:16.32px;color:#6d8ff5;white-space:nowrap;font-weight:bold;">Campos Personalizados:</div>
<div class="a" style="left:25.50px;top:495.47px;font-size:12.6px;line-height:15.12px;color:#f2f2f2;white-space:nowrap;font-weight:bold;">Nome completo:</div>
<div class="a" style="left:205.00px;top:490.00px;width:326.00px;height:28.00px;background:#2b2b2d;border:1px solid #353537;border-radius:3px"></div>
<div class="a" style="left:213.50px;top:496.67px;font-size:12.5px;line-height:15.0px;color:#e6e6e6;white-space:nowrap;">Rose Marculino</div>
<div class="a" style="left:25.50px;top:531.47px;font-size:12.6px;line-height:15.12px;color:#f2f2f2;white-space:nowrap;font-weight:bold;">Primeiro nome:</div>
<div class="a" style="left:205.00px;top:526.70px;width:326.00px;height:28.00px;background:#2b2b2d;border:1px solid #353537;border-radius:3px"></div>
<div class="a" style="left:213.50px;top:533.37px;font-size:12.5px;line-height:15.0px;color:#e6e6e6;white-space:nowrap;">Rose</div>
<div class="a" style="left:25.50px;top:568.67px;font-size:12.6px;line-height:15.12px;color:#f2f2f2;white-space:nowrap;font-weight:bold;">Email:</div>
<div class="a" style="left:205.00px;top:563.30px;width:326.00px;height:28.00px;background:#2b2b2d;border:1px solid #353537;border-radius:3px"></div>
<div class="a" style="left:213.50px;top:569.97px;font-size:12.5px;line-height:15.0px;color:#e6e6e6;white-space:nowrap;">rose.s.marculino@gmail.com</div>
<div class="a" style="left:25.50px;top:605.07px;font-size:12.6px;line-height:15.12px;color:#f2f2f2;white-space:nowrap;font-weight:bold;">User ID:</div>
<div class="a" style="left:205.00px;top:600.00px;width:326.00px;height:28.00px;background:#2b2b2d;border:1px solid #353537;border-radius:3px"></div>
<div class="a" style="left:213.50px;top:606.67px;font-size:12.5px;line-height:15.0px;color:#e6e6e6;white-space:nowrap;">223653</div>
<div class="a" style="left:25.50px;top:641.87px;font-size:12.6px;line-height:15.12px;color:#f2f2f2;white-space:nowrap;font-weight:bold;">Plano:</div>
<div class="a" style="left:205.00px;top:636.70px;width:326.00px;height:28.00px;background:#2b2b2d;border:1px solid #353537;border-radius:3px"></div>
<div class="a" style="left:213.50px;top:643.37px;font-size:12.5px;line-height:15.0px;color:#e6e6e6;white-space:nowrap;">&lt;vazio&gt;</div>
<div class="a" style="left:25.50px;top:679.07px;font-size:12.6px;line-height:15.12px;color:#f2f2f2;white-space:nowrap;font-weight:bold;">Status solicitação:</div>
<div class="a" style="left:205.00px;top:673.80px;width:326.00px;height:28.00px;background:#2b2b2d;border:1px solid #353537;border-radius:3px"></div>
<div class="a" style="left:213.50px;top:680.47px;font-size:12.5px;line-height:15.0px;color:#e6e6e6;white-space:nowrap;">Submissão</div>
<div class="a" style="left:25.50px;top:715.47px;font-size:12.6px;line-height:15.12px;color:#f2f2f2;white-space:nowrap;font-weight:bold;">Status nutrição:</div>
<div class="a" style="left:205.00px;top:710.20px;width:326.00px;height:28.00px;background:#2b2b2d;border:1px solid #353537;border-radius:3px"></div>
<div class="a" style="left:21.50px;top:772.50px;width:222.50px;height:28.50px;border:1px solid #8d8d8d;border-radius:3px"></div>
<svg class="a" style="left:29px;top:779px" width="12" height="14" viewBox="0 0 12 14"><rect x="0.5" y="0.5" width="11" height="13" rx="1.5" fill="#a6a6a6"/><circle cx="6" cy="5.5" r="2" fill="#141414"/><path d="M2.5 11 q0.5 -3 3.5 -3 q3 0 3.5 3z" fill="#141414"/></svg>
<div class="a" style="left:44.50px;top:779.26px;font-size:12.4px;line-height:14.88px;color:#a6a6a6;white-space:nowrap;">Gerenciar Campos Personalizados</div>
<div class="a" style="left:21.00px;top:838.03px;font-size:13.7px;line-height:16.44px;color:#6d8ff5;white-space:nowrap;font-weight:bold;">Outras Informações:</div>
<svg class="a" style="left:21.5px;top:866px" width="12" height="12" viewBox="0 0 12 12"><path d="M3.5 1 l1.6 2.8 l-1.2 1.4 q1 2 3 3 l1.4 -1.2 l2.8 1.6 l-0.6 2 q-0.5 .8 -1.5 .8 q-4 -.5 -6.8 -3.5 q-2.5 -3 -2.7 -6.2 q0 -1 .8 -1.4z" fill="none" stroke="#f2f2f2" stroke-width="1.2" stroke-linejoin="round"/></svg>
<div class="a" style="left:38.00px;top:864.60px;font-size:13.1px;line-height:15.72px;color:#f2f2f2;white-space:nowrap;font-weight:bold;">Aparelho Origem: 5521999258485</div>
<svg class="a" style="left:21px;top:884px" width="12" height="14" viewBox="0 0 12 14"><rect x="0.5" y="2" width="11" height="11.5" rx="1.5" fill="#f2f2f2"/><rect x="2.5" y="0" width="1.6" height="3" fill="#f2f2f2"/><rect x="8" y="0" width="1.6" height="3" fill="#f2f2f2"/><rect x="0.5" y="4.5" width="11" height="0.8" fill="#141414"/></svg>
<div class="a" style="left:36.50px;top:884.34px;font-size:12.85px;line-height:15.42px;color:#f2f2f2;white-space:nowrap;font-weight:bold;">Data de Cadastro: 07/08/22 16:31</div>
<!--/PC-->
</div>
<div id="ann" class="a" style="left:0;top:0;width:1347px;height:958px;z-index:50;pointer-events:none">
 <div class="a" style="left:388.3px;top:70.4px;width:360.5px;height:48px;background:#fff;border:1.5px solid #b81414;box-shadow:1.5px 1.5px 1px #5a0808, 2.5px 2.5px 3px rgba(0,0,0,0.6)"></div>
 <div class="a" style="left:406px;top:77px;font-size:15.5px;color:#111;line-height:18px;white-space:nowrap">This is shown when at whatsapp web appears<br>"Waiting for this message. Check your phome."</div>
 <div class="a" style="left:243.5px;top:473.5px;width:191.5px;height:49.5px;background:#fff;border:1.5px solid #b81414;box-shadow:1.5px 1.5px 1px #5a0808, 2.5px 2.5px 3px rgba(0,0,0,0.6)"></div>
 <div class="a" style="left:261px;top:480px;font-size:15.5px;color:#111;line-height:18px;white-space:nowrap">time that this message<br>arrived at whatsapp</div>
 <svg class="a" style="left:0;top:0" width="1347" height="958">
  <rect x="17" y="176" width="448" height="70.5" fill="none" stroke="#e41010" stroke-width="2.4"/>
  <rect x="25.5" y="501" width="161" height="28" fill="none" stroke="#e41010" stroke-width="2.4"/>
  <line x1="570" y1="120" x2="477" y2="201" stroke="#ee0a0a" stroke-width="4.2" stroke-linecap="round"/>
  <path d="M466 211 L475.5 190.5 L489 204z" fill="#ee0a0a"/>
  <line x1="245" y1="498" x2="204" y2="509" stroke="#ee0a0a" stroke-width="4.2" stroke-linecap="round"/>
  <path d="M187 514.5 L205.5 502 L210 518.5z" fill="#ee0a0a"/>
 </svg>
</div>
</body></html>
